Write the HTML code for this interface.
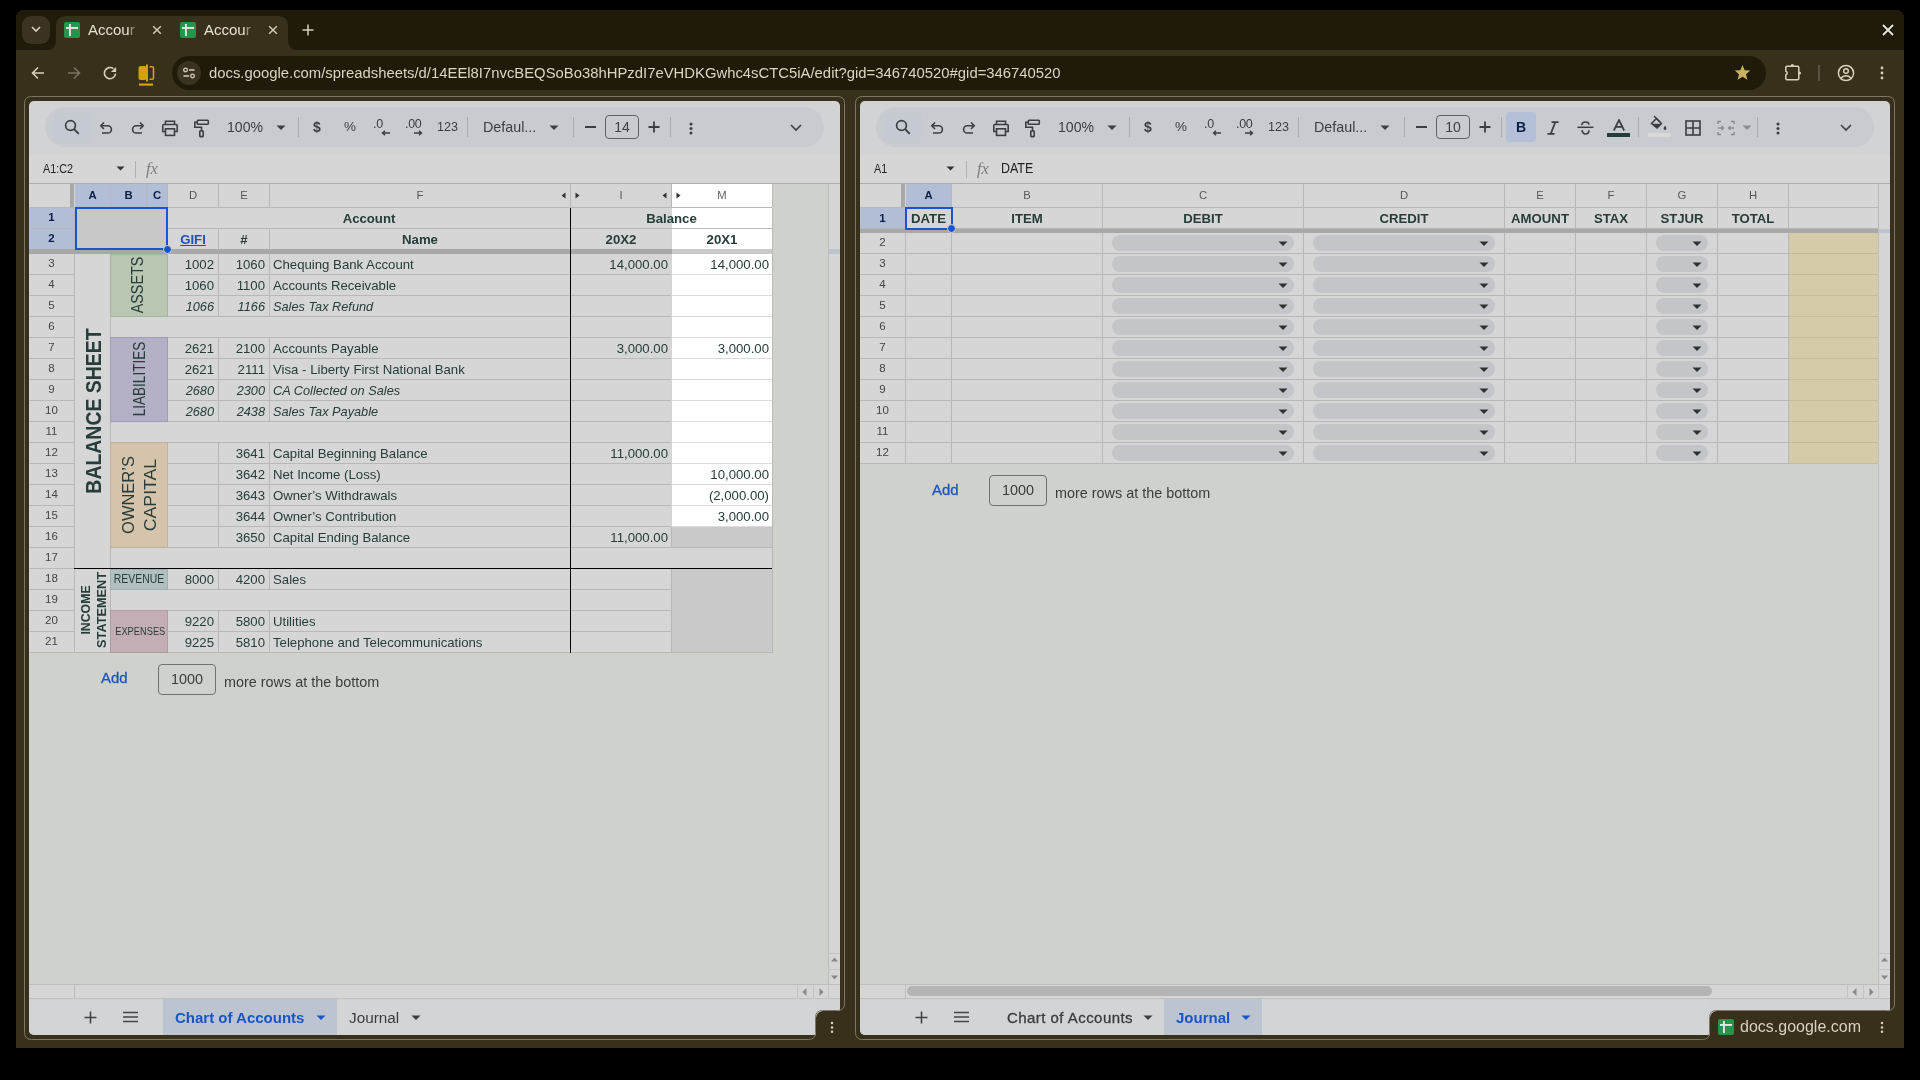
<!DOCTYPE html><html><head><meta charset="utf-8"><style>html,body{margin:0;padding:0;width:1920px;height:1080px;overflow:hidden;background:#000;font-family:"Liberation Sans",sans-serif;}div,svg{position:absolute;box-sizing:content-box;}</style></head><body><div style="left:0;top:0;width:1920px;height:1080px;overflow:hidden;will-change:transform;"><div style="left:16px;top:10px;width:1888px;height:1038px;background:#37301a;border-radius:8px 8px 0 0;"></div>
<div style="left:16px;top:10px;width:1888px;height:40px;background:#1f1a09;border-radius:8px 8px 0 0;"></div>
<div style="left:22px;top:16px;width:28px;height:28px;background:#3a3322;border-radius:9px;"></div>
<svg style="left:31px;top:26px;" width="10" height="7" viewBox="0 0 10 7"><path d="M1 1L5 5L9 1" fill="none" stroke="#d8d0b9" stroke-width="1.6"/></svg>
<svg style="left:46px;top:16px;" width="252" height="34" viewBox="0 0 252 34"><path d="M0 34 Q10 34 10 24 L10 10 Q10 0 20 0 L232 0 Q242 0 242 10 L242 24 Q242 34 252 34 Z" fill="#37301a"/></svg>
<svg style="left:64px;top:22px;" width="16" height="16" viewBox="0 0 16 16"><rect x="0" y="0" width="16" height="16" rx="2" fill="#28934a"/><rect x="2.00" y="4.96" width="12.00" height="1.92" fill="#e8e4ea"/><rect x="4.96" y="2.00" width="1.92" height="12.00" fill="#e8e4ea"/></svg>
<div style="left:88px;top:16px;height:28px;line-height:28px;white-space:nowrap;font-size:15px;color:#e8e2d0;">Accou<span style='opacity:.55'>r</span></div>
<svg style="left:152px;top:25px;" width="10" height="10" viewBox="0 0 10 10"><path d="M1.2 1.2L8.8 8.8M8.8 1.2L1.2 8.8" stroke="#d8d0b9" stroke-width="1.4"/></svg>
<svg style="left:180px;top:22px;" width="16" height="16" viewBox="0 0 16 16"><rect x="0" y="0" width="16" height="16" rx="2" fill="#28934a"/><rect x="2.00" y="4.96" width="12.00" height="1.92" fill="#e8e4ea"/><rect x="4.96" y="2.00" width="1.92" height="12.00" fill="#e8e4ea"/></svg>
<div style="left:204px;top:16px;height:28px;line-height:28px;white-space:nowrap;font-size:15px;color:#e8e2d0;">Accou<span style='opacity:.55'>r</span></div>
<svg style="left:268px;top:25px;" width="10" height="10" viewBox="0 0 10 10"><path d="M1.2 1.2L8.8 8.8M8.8 1.2L1.2 8.8" stroke="#d8d0b9" stroke-width="1.4"/></svg>
<svg style="left:302px;top:24px;" width="12" height="12" viewBox="0 0 12 12"><path d="M6 0.5V11.5M0.5 6H11.5" stroke="#d8d0b9" stroke-width="1.5"/></svg>
<svg style="left:1882px;top:24px;" width="12" height="12" viewBox="0 0 12 12"><path d="M1 1L11 11M11 1L1 11" stroke="#e6e6e6" stroke-width="1.8"/></svg>
<svg style="left:31px;top:66px;" width="14" height="14" viewBox="0 0 14 14"><path d="M13 7H2M7 1.5L1.5 7L7 12.5" fill="none" stroke="#d8d0b9" stroke-width="1.6"/></svg>
<svg style="left:67px;top:66px;" width="14" height="14" viewBox="0 0 14 14"><path d="M1 7H12M7 1.5L12.5 7L7 12.5" fill="none" stroke="#7a7160" stroke-width="1.6"/></svg>
<svg style="left:103px;top:66px;" width="14" height="14" viewBox="0 0 14 14"><path d="M12.6 7.6A5.6 5.6 0 1 1 10.4 2.6" fill="none" stroke="#d8d0b9" stroke-width="1.6"/><path d="M13.1 0.9V6.1H7.9Z" fill="#d8d0b9"/></svg>
<svg style="left:137px;top:64px;" width="18" height="23" viewBox="0 0 18 23"><rect x="1.5" y="2" width="8" height="14" rx="2" fill="#d4a20a"/><rect x="9" y="0.5" width="2" height="17" fill="#d4a20a"/><path d="M12.5 2.8H15.2A1.3 1.3 0 0 1 16.5 4.1V13.9A1.3 1.3 0 0 1 15.2 15.2H12.5" fill="none" stroke="#d4a20a" stroke-width="1.6"/><rect x="2" y="19.5" width="14" height="2.2" fill="#d4a20a"/></svg>
<div style="left:172px;top:56px;width:1594px;height:34px;background:#1f1a09;border-radius:17px;"></div>
<div style="left:177px;top:61px;width:24px;height:24px;background:#3a3322;border-radius:12px;"></div>
<svg style="left:181px;top:65px;" width="16" height="16" viewBox="0 0 16 16"><circle cx="4.5" cy="5" r="1.8" fill="none" stroke="#d8d0b9" stroke-width="1.3"/><path d="M8 5H13.5M2.5 11H8" stroke="#d8d0b9" stroke-width="1.3"/><circle cx="11.5" cy="11" r="1.8" fill="none" stroke="#d8d0b9" stroke-width="1.3"/></svg>
<div style="left:209px;top:56px;height:34px;line-height:34px;white-space:nowrap;font-size:14.85px;color:#dcd5c2;">docs.google.com/spreadsheets/d/14EEl8I7nvcBEQSoBo38hHPzdI7eVHDKGwhc4sCTC5iA/edit?gid=346740520#gid=346740520</div>
<svg style="left:1734px;top:64px;" width="17" height="17" viewBox="0 0 17 17"><path d="M8.5 1L10.7 6.2L16.3 6.6L12 10.2L13.4 15.7L8.5 12.7L3.6 15.7L5 10.2L0.7 6.6L6.3 6.2Z" fill="#c9b25a"/></svg>
<svg style="left:1784px;top:63px;" width="20" height="20" viewBox="0 0 20 20"><path d="M3 3.3H13.6A1.2 1.2 0 0 1 14.8 4.5V15.5A1.2 1.2 0 0 1 13.6 16.7H3A1.2 1.2 0 0 1 1.8 15.5V12A2 2 0 0 0 1.8 8.2V4.5A1.2 1.2 0 0 1 3 3.3Z" fill="none" stroke="#d8d0b9" stroke-width="1.5"/><circle cx="8.3" cy="2.6" r="1.5" fill="#d8d0b9"/><circle cx="15.5" cy="10.1" r="1.5" fill="#d8d0b9"/></svg>
<div style="left:1818px;top:65px;width:1.5px;height:16px;background:#5a5342;"></div>
<svg style="left:1837px;top:64px;" width="18" height="18" viewBox="0 0 18 18"><circle cx="9" cy="9" r="7.6" fill="none" stroke="#d8d0b9" stroke-width="1.5"/><circle cx="9" cy="7" r="2.3" fill="none" stroke="#d8d0b9" stroke-width="1.5"/><path d="M4 14Q9 9.5 14 14" fill="none" stroke="#d8d0b9" stroke-width="1.5"/></svg>
<svg style="left:1879px;top:65px;" width="6" height="16" viewBox="0 0 6 16"><circle cx="3" cy="3" r="1.4" fill="#d8d0b9"/><circle cx="3" cy="8" r="1.4" fill="#d8d0b9"/><circle cx="3" cy="13" r="1.4" fill="#d8d0b9"/></svg>
<div style="left:29px;top:101px;width:811px;height:934px;background:#d2d3d5;border-radius:5px 5px 4px 5px;"></div>
<div style="left:29px;top:1000px;width:786px;height:35px;background:#d3d4d6;border-radius:0 0 4px 5px;"></div>
<div style="left:45px;top:107px;width:779px;height:40px;background:#c8cbd0;border-radius:20px;"></div>
<div style="left:54px;top:113px;width:36px;height:28px;background:#c5c9d1;"></div>
<svg style="left:62.5px;top:118px;" width="18" height="18" viewBox="0 0 18 18"><circle cx="7.5" cy="7.5" r="4.9" fill="none" stroke="#3b3e42" stroke-width="1.7"/><path d="M11 11L15.8 15.8" stroke="#3b3e42" stroke-width="1.8"/></svg>
<svg style="left:98px;top:121px;" width="16" height="16" viewBox="0 0 16 16"><path d="M6 1.5L2.8 4.8L6 8" fill="none" stroke="#3b3e42" stroke-width="1.6"/><path d="M3 4.8H9.8A3.6 3.6 0 0 1 9.8 12H4" fill="none" stroke="#3b3e42" stroke-width="1.6"/></svg>
<svg style="left:130px;top:121px;" width="16" height="16" viewBox="0 0 16 16"><path d="M10 1.5L13.2 4.8L10 8" fill="none" stroke="#3b3e42" stroke-width="1.6"/><path d="M13 4.8H6.2A3.6 3.6 0 0 0 6.2 12H12" fill="none" stroke="#3b3e42" stroke-width="1.6"/></svg>
<svg style="left:161px;top:120px;" width="18" height="17" viewBox="0 0 18 17"><path d="M4.5 4.5V1.2H13.5V4.5" fill="none" stroke="#3b3e42" stroke-width="1.6"/><path d="M4 11.5H1.8V5.5A1 1 0 0 1 2.8 4.5H15.2A1 1 0 0 1 16.2 5.5V11.5H14" fill="none" stroke="#3b3e42" stroke-width="1.6"/><rect x="4.5" y="8.8" width="9" height="6.6" fill="none" stroke="#3b3e42" stroke-width="1.6"/></svg>
<svg style="left:193px;top:119px;" width="17" height="19" viewBox="0 0 17 19"><rect x="4.3" y="1.3" width="11" height="4" rx="0.8" fill="none" stroke="#3b3e42" stroke-width="1.6"/><path d="M4.3 3.3H1.8V8.3H8.5V12" fill="none" stroke="#3b3e42" stroke-width="1.6"/><rect x="6.8" y="12" width="3.4" height="5.6" rx="0.6" fill="none" stroke="#3b3e42" stroke-width="1.6"/></svg>
<div style="left:227px;top:117px;height:20px;line-height:20px;white-space:nowrap;font-size:14.1px;color:#3b3e42;">100%</div>
<svg style="left:276px;top:125px;" width="10" height="6" viewBox="0 0 10 6"><path d="M0.5 0.5H9.5L5 5Z" fill="#3b3e42"/></svg>
<div style="left:298px;top:117px;width:1px;height:20px;background:#a9abaf;"></div>
<div style="left:313px;top:117px;height:20px;line-height:20px;white-space:nowrap;font-size:14px;font-weight:bold;color:#3b3e42;">$</div>
<div style="left:344px;top:117px;height:20px;line-height:20px;white-space:nowrap;font-size:13.5px;color:#3b3e42;">%</div>
<div style="left:373px;top:114px;height:20px;line-height:20px;white-space:nowrap;font-size:12.5px;color:#3b3e42;letter-spacing:-0.3px;">.0</div>
<svg style="left:381px;top:130px;" width="10" height="6" viewBox="0 0 10 6"><path d="M9 3H2M4 0.8L1.5 3L4 5.2" fill="none" stroke="#3b3e42" stroke-width="1.4"/></svg>
<div style="left:405px;top:114px;height:20px;line-height:20px;white-space:nowrap;font-size:12.5px;color:#3b3e42;letter-spacing:-0.3px;">.00</div>
<svg style="left:413px;top:130px;" width="10" height="6" viewBox="0 0 10 6"><path d="M1 3H8M6 0.8L8.5 3L6 5.2" fill="none" stroke="#3b3e42" stroke-width="1.4"/></svg>
<div style="left:437px;top:117px;height:20px;line-height:20px;white-space:nowrap;font-size:12.6px;color:#3b3e42;">123</div>
<div style="left:467px;top:117px;width:1px;height:20px;background:#a9abaf;"></div>
<div style="left:483px;top:117px;height:20px;line-height:20px;white-space:nowrap;font-size:14.3px;color:#3b3e42;">Defaul...</div>
<svg style="left:549px;top:125px;" width="10" height="6" viewBox="0 0 10 6"><path d="M0.5 0.5H9.5L5 5Z" fill="#3b3e42"/></svg>
<div style="left:573px;top:117px;width:1px;height:20px;background:#a9abaf;"></div>
<div style="left:585px;top:126px;width:11px;height:1.8px;background:#3b3e42;"></div>
<div style="left:605px;top:115px;width:32px;height:22px;border:1.2px solid #5f6368;border-radius:4px;text-align:center;line-height:22px;font-size:14px;color:#3b3e42;">14</div>
<svg style="left:648px;top:121px;" width="12" height="12" viewBox="0 0 12 12"><path d="M6 0.5V11.5M0.5 6H11.5" stroke="#3b3e42" stroke-width="1.8"/></svg>
<div style="left:670px;top:117px;width:1px;height:20px;background:#a9abaf;"></div>
<div style="left:29px;top:155px;width:811px;height:28px;background:#d6d6d6;"></div>
<div style="left:29px;top:183px;width:811px;height:802px;background:#cfd1cd;"></div>
<div style="left:828px;top:183px;width:12px;height:802px;background:#d6d6d6;border-left:1px solid #bdbdbd;box-sizing:border-box;"></div>
<div style="left:29px;top:984px;width:811px;height:1px;background:#bdbdbd;"></div>
<div style="left:29px;top:985px;width:811px;height:13px;background:#d6d6d6;"></div>
<div style="left:29px;top:998px;width:811px;height:1px;background:#c0c0c0;"></div>
<div style="left:74px;top:985px;width:1px;height:13px;background:#bdbdbd;"></div>
<svg style="left:831px;top:957px;" width="7" height="5" viewBox="0 0 7 5"><path d="M0 4.5H7L3.5 0.5Z" fill="#888"/></svg>
<svg style="left:831px;top:975px;" width="7" height="5" viewBox="0 0 7 5"><path d="M0 0.5H7L3.5 4.5Z" fill="#888"/></svg>
<div style="left:828px;top:953px;width:12px;height:1px;background:#c4c4c4;"></div>
<div style="left:828px;top:969px;width:12px;height:1px;background:#c4c4c4;"></div>
<div style="left:797px;top:985px;width:1px;height:13px;background:#c4c4c4;"></div>
<div style="left:813px;top:985px;width:1px;height:13px;background:#c4c4c4;"></div>
<div style="left:828px;top:985px;width:1px;height:13px;background:#c4c4c4;"></div>
<svg style="left:802px;top:988px;" width="5" height="8" viewBox="0 0 5 8"><path d="M4.5 0L0.5 4L4.5 8Z" fill="#888"/></svg>
<svg style="left:819px;top:988px;" width="5" height="8" viewBox="0 0 5 8"><path d="M0.5 0L4.5 4L0.5 8Z" fill="#888"/></svg>
<svg style="left:84px;top:1011px;" width="13" height="13" viewBox="0 0 13 13"><path d="M6.5 0.5V12.5M0.5 6.5H12.5" stroke="#444" stroke-width="1.6"/></svg>
<svg style="left:123px;top:1011px;" width="15" height="12" viewBox="0 0 15 12"><path d="M0 1.5H15M0 6H15M0 10.5H15" stroke="#444" stroke-width="1.6"/></svg>
<div style="left:860px;top:101px;width:1030px;height:934px;background:#d2d3d5;border-radius:5px 5px 4px 5px;"></div>
<div style="left:860px;top:1000px;width:849px;height:35px;background:#d3d4d6;border-radius:0 0 4px 5px;"></div>
<div style="left:876px;top:107px;width:998px;height:40px;background:#c8cbd0;border-radius:20px;"></div>
<div style="left:885px;top:113px;width:36px;height:28px;background:#c5c9d1;"></div>
<svg style="left:893.5px;top:118px;" width="18" height="18" viewBox="0 0 18 18"><circle cx="7.5" cy="7.5" r="4.9" fill="none" stroke="#3b3e42" stroke-width="1.7"/><path d="M11 11L15.8 15.8" stroke="#3b3e42" stroke-width="1.8"/></svg>
<svg style="left:929px;top:121px;" width="16" height="16" viewBox="0 0 16 16"><path d="M6 1.5L2.8 4.8L6 8" fill="none" stroke="#3b3e42" stroke-width="1.6"/><path d="M3 4.8H9.8A3.6 3.6 0 0 1 9.8 12H4" fill="none" stroke="#3b3e42" stroke-width="1.6"/></svg>
<svg style="left:961px;top:121px;" width="16" height="16" viewBox="0 0 16 16"><path d="M10 1.5L13.2 4.8L10 8" fill="none" stroke="#3b3e42" stroke-width="1.6"/><path d="M13 4.8H6.2A3.6 3.6 0 0 0 6.2 12H12" fill="none" stroke="#3b3e42" stroke-width="1.6"/></svg>
<svg style="left:992px;top:120px;" width="18" height="17" viewBox="0 0 18 17"><path d="M4.5 4.5V1.2H13.5V4.5" fill="none" stroke="#3b3e42" stroke-width="1.6"/><path d="M4 11.5H1.8V5.5A1 1 0 0 1 2.8 4.5H15.2A1 1 0 0 1 16.2 5.5V11.5H14" fill="none" stroke="#3b3e42" stroke-width="1.6"/><rect x="4.5" y="8.8" width="9" height="6.6" fill="none" stroke="#3b3e42" stroke-width="1.6"/></svg>
<svg style="left:1024px;top:119px;" width="17" height="19" viewBox="0 0 17 19"><rect x="4.3" y="1.3" width="11" height="4" rx="0.8" fill="none" stroke="#3b3e42" stroke-width="1.6"/><path d="M4.3 3.3H1.8V8.3H8.5V12" fill="none" stroke="#3b3e42" stroke-width="1.6"/><rect x="6.8" y="12" width="3.4" height="5.6" rx="0.6" fill="none" stroke="#3b3e42" stroke-width="1.6"/></svg>
<div style="left:1058px;top:117px;height:20px;line-height:20px;white-space:nowrap;font-size:14.1px;color:#3b3e42;">100%</div>
<svg style="left:1107px;top:125px;" width="10" height="6" viewBox="0 0 10 6"><path d="M0.5 0.5H9.5L5 5Z" fill="#3b3e42"/></svg>
<div style="left:1129px;top:117px;width:1px;height:20px;background:#a9abaf;"></div>
<div style="left:1144px;top:117px;height:20px;line-height:20px;white-space:nowrap;font-size:14px;font-weight:bold;color:#3b3e42;">$</div>
<div style="left:1175px;top:117px;height:20px;line-height:20px;white-space:nowrap;font-size:13.5px;color:#3b3e42;">%</div>
<div style="left:1204px;top:114px;height:20px;line-height:20px;white-space:nowrap;font-size:12.5px;color:#3b3e42;letter-spacing:-0.3px;">.0</div>
<svg style="left:1212px;top:130px;" width="10" height="6" viewBox="0 0 10 6"><path d="M9 3H2M4 0.8L1.5 3L4 5.2" fill="none" stroke="#3b3e42" stroke-width="1.4"/></svg>
<div style="left:1236px;top:114px;height:20px;line-height:20px;white-space:nowrap;font-size:12.5px;color:#3b3e42;letter-spacing:-0.3px;">.00</div>
<svg style="left:1244px;top:130px;" width="10" height="6" viewBox="0 0 10 6"><path d="M1 3H8M6 0.8L8.5 3L6 5.2" fill="none" stroke="#3b3e42" stroke-width="1.4"/></svg>
<div style="left:1268px;top:117px;height:20px;line-height:20px;white-space:nowrap;font-size:12.6px;color:#3b3e42;">123</div>
<div style="left:1298px;top:117px;width:1px;height:20px;background:#a9abaf;"></div>
<div style="left:1314px;top:117px;height:20px;line-height:20px;white-space:nowrap;font-size:14.3px;color:#3b3e42;">Defaul...</div>
<svg style="left:1380px;top:125px;" width="10" height="6" viewBox="0 0 10 6"><path d="M0.5 0.5H9.5L5 5Z" fill="#3b3e42"/></svg>
<div style="left:1404px;top:117px;width:1px;height:20px;background:#a9abaf;"></div>
<div style="left:1416px;top:126px;width:11px;height:1.8px;background:#3b3e42;"></div>
<div style="left:1436px;top:115px;width:32px;height:22px;border:1.2px solid #5f6368;border-radius:4px;text-align:center;line-height:22px;font-size:14px;color:#3b3e42;">10</div>
<svg style="left:1479px;top:121px;" width="12" height="12" viewBox="0 0 12 12"><path d="M6 0.5V11.5M0.5 6H11.5" stroke="#3b3e42" stroke-width="1.8"/></svg>
<div style="left:1501px;top:117px;width:1px;height:20px;background:#a9abaf;"></div>
<div style="left:860px;top:155px;width:1030px;height:28px;background:#d6d6d6;"></div>
<div style="left:860px;top:183px;width:1030px;height:802px;background:#cfd1cd;"></div>
<div style="left:1878px;top:183px;width:12px;height:802px;background:#d6d6d6;border-left:1px solid #bdbdbd;box-sizing:border-box;"></div>
<div style="left:860px;top:984px;width:1030px;height:1px;background:#bdbdbd;"></div>
<div style="left:860px;top:985px;width:1030px;height:13px;background:#d6d6d6;"></div>
<div style="left:860px;top:998px;width:1030px;height:1px;background:#c0c0c0;"></div>
<div style="left:905px;top:985px;width:1px;height:13px;background:#bdbdbd;"></div>
<svg style="left:1881px;top:957px;" width="7" height="5" viewBox="0 0 7 5"><path d="M0 4.5H7L3.5 0.5Z" fill="#888"/></svg>
<svg style="left:1881px;top:975px;" width="7" height="5" viewBox="0 0 7 5"><path d="M0 0.5H7L3.5 4.5Z" fill="#888"/></svg>
<div style="left:1878px;top:953px;width:12px;height:1px;background:#c4c4c4;"></div>
<div style="left:1878px;top:969px;width:12px;height:1px;background:#c4c4c4;"></div>
<div style="left:1847px;top:985px;width:1px;height:13px;background:#c4c4c4;"></div>
<div style="left:1863px;top:985px;width:1px;height:13px;background:#c4c4c4;"></div>
<div style="left:1878px;top:985px;width:1px;height:13px;background:#c4c4c4;"></div>
<svg style="left:1852px;top:988px;" width="5" height="8" viewBox="0 0 5 8"><path d="M4.5 0L0.5 4L4.5 8Z" fill="#888"/></svg>
<svg style="left:1869px;top:988px;" width="5" height="8" viewBox="0 0 5 8"><path d="M0.5 0L4.5 4L0.5 8Z" fill="#888"/></svg>
<svg style="left:915px;top:1011px;" width="13" height="13" viewBox="0 0 13 13"><path d="M6.5 0.5V12.5M0.5 6.5H12.5" stroke="#444" stroke-width="1.6"/></svg>
<svg style="left:954px;top:1011px;" width="15" height="12" viewBox="0 0 15 12"><path d="M0 1.5H15M0 6H15M0 10.5H15" stroke="#444" stroke-width="1.6"/></svg>
<svg style="left:688px;top:120.5px;" width="6" height="16" viewBox="0 0 6 16"><circle cx="3" cy="3" r="1.5" fill="#3b3e42"/><circle cx="3" cy="7.5" r="1.5" fill="#3b3e42"/><circle cx="3" cy="12.0" r="1.5" fill="#3b3e42"/></svg>
<svg style="left:790px;top:124px;" width="12" height="8" viewBox="0 0 12 8"><path d="M1 1L6 6L11 1" fill="none" stroke="#3b3e42" stroke-width="1.6"/></svg>
<div style="left:1506px;top:112px;width:30px;height:30px;background:#b3c0d8;border-radius:4px;"></div>
<div style="left:1516px;top:117px;height:20px;line-height:20px;white-space:nowrap;font-size:14px;font-weight:bold;color:#0b1f48;">B</div>
<svg style="left:1546px;top:121px;" width="14" height="14" viewBox="0 0 14 14"><path d="M5.5 1.2H12.5M1.5 12.8H8.5M9.2 1.2L4.8 12.8" fill="none" stroke="#3b3e42" stroke-width="1.8"/></svg>
<svg style="left:1577px;top:121px;" width="17" height="14" viewBox="0 0 17 14"><path d="M0.5 6.3H16.5" stroke="#3b3e42" stroke-width="1.5"/><path d="M4.8 4.2Q5 1 8.5 1Q11.8 1 12 3.6" fill="none" stroke="#3b3e42" stroke-width="1.6"/><path d="M5 9.2Q5.5 13 8.5 13Q11.8 13 12 9.2" fill="none" stroke="#3b3e42" stroke-width="1.6"/></svg>
<svg style="left:1612px;top:119px;" width="14" height="13" viewBox="0 0 14 13"><path d="M1.8 11.5L7 1L12.2 11.5M3.8 7.8H10.2" fill="none" stroke="#3b3e42" stroke-width="1.7"/></svg>
<div style="left:1607px;top:133px;width:23px;height:4px;background:#233d39;"></div>
<div style="left:1638px;top:117px;width:1px;height:20px;background:#a9abaf;"></div>
<svg style="left:1650px;top:115px;" width="18" height="17" viewBox="0 0 18 17"><path d="M4 1L10 7" stroke="#3b3e42" stroke-width="1.5"/><path d="M1.5 8.5L6.5 3.5L11.5 8.5L7 13L1.5 8.5Z" fill="none" stroke="#3b3e42" stroke-width="1.5"/><path d="M2 8.8H11.2L7 13Z" fill="#3b3e42"/><path d="M15 10.5Q13.5 12.8 13.6 13.6A1.4 1.4 0 0 0 16.4 13.6Q16.5 12.8 15 10.5Z" fill="#3b3e42"/></svg>
<div style="left:1648px;top:133px;width:23px;height:4px;background:#d9d9d7;"></div>
<svg style="left:1685px;top:120px;" width="16" height="16" viewBox="0 0 16 16"><rect x="1" y="1" width="14" height="14" fill="none" stroke="#3b3e42" stroke-width="1.6"/><path d="M8 1V15M1 8H15" stroke="#3b3e42" stroke-width="1.6"/></svg>
<svg style="left:1717px;top:120px;" width="18" height="16" viewBox="0 0 18 16"><path d="M1 4V1.5H4M1 12V14.5H4M17 4V1.5H14M17 12V14.5H14" fill="none" stroke="#8c8d90" stroke-width="1.5"/><path d="M1 8H6M4.5 6L6.5 8L4.5 10M17 8H12M13.5 6L11.5 8L13.5 10" fill="none" stroke="#8c8d90" stroke-width="1.4"/></svg>
<svg style="left:1742px;top:125px;" width="10" height="6" viewBox="0 0 10 6"><path d="M0.5 0.5H9.5L5 5Z" fill="#8c8d90"/></svg>
<div style="left:1757px;top:117px;width:1px;height:20px;background:#a9abaf;"></div>
<svg style="left:1775px;top:120.5px;" width="6" height="16" viewBox="0 0 6 16"><circle cx="3" cy="3" r="1.5" fill="#3b3e42"/><circle cx="3" cy="7.5" r="1.5" fill="#3b3e42"/><circle cx="3" cy="12.0" r="1.5" fill="#3b3e42"/></svg>
<svg style="left:1840px;top:124px;" width="12" height="8" viewBox="0 0 12 8"><path d="M1 1L6 6L11 1" fill="none" stroke="#3b3e42" stroke-width="1.6"/></svg>
<div style="left:43px;top:158px;height:22px;line-height:22px;white-space:nowrap;font-size:12.6px;color:#202124;transform:scaleX(0.86);transform-origin:0 0;">A1:C2</div>
<svg style="left:116px;top:166px;" width="9" height="5" viewBox="0 0 9 5"><path d="M0.5 0.5H8.5L4.5 4.5Z" fill="#333"/></svg>
<div style="left:135px;top:161px;width:1px;height:17px;background:#b0b0b0;"></div>
<div style="left:146px;top:158px;height:22px;line-height:22px;white-space:nowrap;font-family:'Liberation Serif',serif;font-size:16.5px;color:#7d7d7d;"><i>fx</i></div>
<div style="left:874px;top:158px;height:22px;line-height:22px;white-space:nowrap;font-size:12.6px;color:#202124;transform:scaleX(0.85);transform-origin:0 0;">A1</div>
<svg style="left:946px;top:166px;" width="9" height="5" viewBox="0 0 9 5"><path d="M0.5 0.5H8.5L4.5 4.5Z" fill="#333"/></svg>
<div style="left:966px;top:161px;width:1px;height:17px;background:#b0b0b0;"></div>
<div style="left:977px;top:158px;height:22px;line-height:22px;white-space:nowrap;font-family:'Liberation Serif',serif;font-size:16.5px;color:#7d7d7d;"><i>fx</i></div>
<div style="left:1001px;top:156.5px;height:22px;line-height:22px;white-space:nowrap;font-size:15px;color:#202124;transform:scaleX(0.83);transform-origin:0 0;">DATE</div>
<div style="left:29px;top:183px;width:743px;height:24px;background:#d6d6d6;"></div>
<div style="left:672px;top:183px;width:100px;height:24px;background:#ffffff;"></div>
<div style="left:75px;top:184px;width:92px;height:23px;background:#b1bed6;"></div>
<div style="left:29px;top:183px;width:811px;height:1px;background:#acacac;"></div>
<div style="left:29px;top:207px;width:743px;height:1px;background:#b8b8b8;"></div>
<div style="left:70px;top:184px;width:4px;height:23px;background:#a8a8a8;"></div>
<div style="left:110px;top:184px;width:1px;height:23px;background:#b8b8b8;"></div>
<div style="left:146px;top:184px;width:1px;height:23px;background:#b8b8b8;"></div>
<div style="left:167px;top:184px;width:1px;height:23px;background:#b8b8b8;"></div>
<div style="left:218px;top:184px;width:1px;height:23px;background:#b8b8b8;"></div>
<div style="left:269px;top:184px;width:1px;height:23px;background:#b8b8b8;"></div>
<div style="left:570px;top:184px;width:1px;height:23px;background:#b8b8b8;"></div>
<div style="left:671px;top:184px;width:1px;height:23px;background:#b8b8b8;"></div>
<div style="left:772px;top:184px;width:1px;height:23px;background:#b8b8b8;"></div>
<div style="left:75px;top:184px;width:35px;height:23px;line-height:23px;text-align:center;font-size:11.3px;font-weight:bold;color:#0b1f48;">A</div>
<div style="left:111px;top:184px;width:35px;height:23px;line-height:23px;text-align:center;font-size:11.3px;font-weight:bold;color:#0b1f48;">B</div>
<div style="left:147px;top:184px;width:20px;height:23px;line-height:23px;text-align:center;font-size:11.3px;font-weight:bold;color:#0b1f48;">C</div>
<div style="left:168px;top:184px;width:50px;height:23px;line-height:23px;text-align:center;font-size:11.3px;color:#575757;">D</div>
<div style="left:219px;top:184px;width:50px;height:23px;line-height:23px;text-align:center;font-size:11.3px;color:#575757;">E</div>
<div style="left:270px;top:184px;width:300px;height:23px;line-height:23px;text-align:center;font-size:11.3px;color:#575757;">F</div>
<div style="left:571px;top:184px;width:100px;height:23px;line-height:23px;text-align:center;font-size:11.3px;color:#575757;">I</div>
<div style="left:672px;top:184px;width:100px;height:23px;line-height:23px;text-align:center;font-size:11.3px;color:#5f5f5f;">M</div>
<svg style="left:561px;top:192px;" width="5" height="7" viewBox="0 0 5 7"><path d="M4.5 0.5V6.5L0.5 3.5Z" fill="#333"/></svg>
<svg style="left:575px;top:192px;" width="5" height="7" viewBox="0 0 5 7"><path d="M0.5 0.5V6.5L4.5 3.5Z" fill="#333"/></svg>
<svg style="left:662px;top:192px;" width="5" height="7" viewBox="0 0 5 7"><path d="M4.5 0.5V6.5L0.5 3.5Z" fill="#333"/></svg>
<svg style="left:676px;top:192px;" width="5" height="7" viewBox="0 0 5 7"><path d="M0.5 0.5V6.5L4.5 3.5Z" fill="#333"/></svg>
<div style="left:29px;top:208px;width:743px;height:445px;background:#d6d6d6;"></div>
<div style="left:672px;top:208px;width:100px;height:339px;background:#ffffff;"></div>
<div style="left:672px;top:527px;width:100px;height:21px;background:#c9c9c9;"></div>
<div style="left:672px;top:569px;width:100px;height:84px;background:#c9c9c9;"></div>
<div style="left:75px;top:208px;width:92px;height:41px;background:#c8c8c8;"></div>
<div style="left:29px;top:208px;width:45px;height:41px;background:#b1bed6;"></div>
<div style="left:74px;top:208px;width:1px;height:445px;background:#b8b8b8;"></div>
<div style="left:29px;top:228px;width:45px;height:1px;background:#b8b8b8;"></div>
<div style="left:29px;top:249px;width:743px;height:1px;background:#b8b8b8;"></div>
<div style="left:29px;top:249px;width:743px;height:5px;background:#a8a8a8;"></div>
<div style="left:672px;top:249px;width:100px;height:5px;background:#c9c9c9;"></div>
<div style="left:829px;top:249px;width:11px;height:5px;background:#bcc4d0;"></div>
<div style="left:29px;top:208px;width:45px;height:20px;line-height:19.5px;text-align:center;font-size:11.5px;font-weight:bold;color:#0b1f48;">1</div>
<div style="left:29px;top:229px;width:45px;height:20px;line-height:19.5px;text-align:center;font-size:11.5px;font-weight:bold;color:#0b1f48;">2</div>
<div style="left:29px;top:274px;width:45px;height:1px;background:#b8b8b8;"></div>
<div style="left:29px;top:254px;width:45px;height:20px;line-height:19px;text-align:center;font-size:11.5px;color:#444;">3</div>
<div style="left:29px;top:295px;width:45px;height:1px;background:#b8b8b8;"></div>
<div style="left:29px;top:275px;width:45px;height:20px;line-height:19px;text-align:center;font-size:11.5px;color:#444;">4</div>
<div style="left:29px;top:316px;width:45px;height:1px;background:#b8b8b8;"></div>
<div style="left:29px;top:296px;width:45px;height:20px;line-height:19px;text-align:center;font-size:11.5px;color:#444;">5</div>
<div style="left:29px;top:337px;width:45px;height:1px;background:#b8b8b8;"></div>
<div style="left:29px;top:317px;width:45px;height:20px;line-height:19px;text-align:center;font-size:11.5px;color:#444;">6</div>
<div style="left:29px;top:358px;width:45px;height:1px;background:#b8b8b8;"></div>
<div style="left:29px;top:338px;width:45px;height:20px;line-height:19px;text-align:center;font-size:11.5px;color:#444;">7</div>
<div style="left:29px;top:379px;width:45px;height:1px;background:#b8b8b8;"></div>
<div style="left:29px;top:359px;width:45px;height:20px;line-height:19px;text-align:center;font-size:11.5px;color:#444;">8</div>
<div style="left:29px;top:400px;width:45px;height:1px;background:#b8b8b8;"></div>
<div style="left:29px;top:380px;width:45px;height:20px;line-height:19px;text-align:center;font-size:11.5px;color:#444;">9</div>
<div style="left:29px;top:421px;width:45px;height:1px;background:#b8b8b8;"></div>
<div style="left:29px;top:401px;width:45px;height:20px;line-height:19px;text-align:center;font-size:11.5px;color:#444;">10</div>
<div style="left:29px;top:442px;width:45px;height:1px;background:#b8b8b8;"></div>
<div style="left:29px;top:422px;width:45px;height:20px;line-height:19px;text-align:center;font-size:11.5px;color:#444;">11</div>
<div style="left:29px;top:463px;width:45px;height:1px;background:#b8b8b8;"></div>
<div style="left:29px;top:443px;width:45px;height:20px;line-height:19px;text-align:center;font-size:11.5px;color:#444;">12</div>
<div style="left:29px;top:484px;width:45px;height:1px;background:#b8b8b8;"></div>
<div style="left:29px;top:464px;width:45px;height:20px;line-height:19px;text-align:center;font-size:11.5px;color:#444;">13</div>
<div style="left:29px;top:505px;width:45px;height:1px;background:#b8b8b8;"></div>
<div style="left:29px;top:485px;width:45px;height:20px;line-height:19px;text-align:center;font-size:11.5px;color:#444;">14</div>
<div style="left:29px;top:526px;width:45px;height:1px;background:#b8b8b8;"></div>
<div style="left:29px;top:506px;width:45px;height:20px;line-height:19px;text-align:center;font-size:11.5px;color:#444;">15</div>
<div style="left:29px;top:547px;width:45px;height:1px;background:#b8b8b8;"></div>
<div style="left:29px;top:527px;width:45px;height:20px;line-height:19px;text-align:center;font-size:11.5px;color:#444;">16</div>
<div style="left:29px;top:568px;width:45px;height:1px;background:#b8b8b8;"></div>
<div style="left:29px;top:548px;width:45px;height:20px;line-height:19px;text-align:center;font-size:11.5px;color:#444;">17</div>
<div style="left:29px;top:589px;width:45px;height:1px;background:#b8b8b8;"></div>
<div style="left:29px;top:569px;width:45px;height:20px;line-height:19px;text-align:center;font-size:11.5px;color:#444;">18</div>
<div style="left:29px;top:610px;width:45px;height:1px;background:#b8b8b8;"></div>
<div style="left:29px;top:590px;width:45px;height:20px;line-height:19px;text-align:center;font-size:11.5px;color:#444;">19</div>
<div style="left:29px;top:631px;width:45px;height:1px;background:#b8b8b8;"></div>
<div style="left:29px;top:611px;width:45px;height:20px;line-height:19px;text-align:center;font-size:11.5px;color:#444;">20</div>
<div style="left:29px;top:652px;width:45px;height:1px;background:#b8b8b8;"></div>
<div style="left:29px;top:632px;width:45px;height:20px;line-height:19px;text-align:center;font-size:11.5px;color:#444;">21</div>
<div style="left:168px;top:228px;width:604px;height:1px;background:#b8b8b8;"></div>
<div style="left:218px;top:229px;width:1px;height:20px;background:#b8b8b8;"></div>
<div style="left:269px;top:229px;width:1px;height:20px;background:#b8b8b8;"></div>
<div style="left:671px;top:229px;width:1px;height:20px;background:#d4d4d4;"></div>
<div style="left:772px;top:208px;width:1px;height:445px;background:#b8b8b8;"></div>
<div style="left:168px;top:208px;width:402px;height:21px;line-height:21px;text-align:center;white-space:nowrap;font-size:13.2px;color:#263d39;font-weight:bold;">Account</div>
<div style="left:571px;top:208px;width:201px;height:21px;line-height:21px;text-align:center;white-space:nowrap;font-size:13.2px;color:#263d39;font-weight:bold;">Balance</div>
<div style="left:168px;top:229px;width:50px;height:21px;line-height:21px;text-align:center;white-space:nowrap;font-size:13.2px;color:#263d39;font-weight:bold;color:#1f4fb8;"><u>GIFI</u></div>
<div style="left:219px;top:229px;width:50px;height:21px;line-height:21px;text-align:center;white-space:nowrap;font-size:13.2px;color:#263d39;font-weight:bold;">#</div>
<div style="left:270px;top:229px;width:300px;height:21px;line-height:21px;text-align:center;white-space:nowrap;font-size:13.2px;color:#263d39;font-weight:bold;">Name</div>
<div style="left:571px;top:229px;width:100px;height:21px;line-height:21px;text-align:center;white-space:nowrap;font-size:13.2px;color:#263d39;font-weight:bold;">20X2</div>
<div style="left:672px;top:229px;width:100px;height:21px;line-height:21px;text-align:center;white-space:nowrap;font-size:13.2px;color:#263d39;font-weight:bold;">20X1</div>
<div style="left:167px;top:254px;width:1px;height:21px;background:#b8b8b8;"></div>
<div style="left:218px;top:254px;width:1px;height:21px;background:#b8b8b8;"></div>
<div style="left:269px;top:254px;width:1px;height:21px;background:#b8b8b8;"></div>
<div style="left:167px;top:275px;width:1px;height:21px;background:#b8b8b8;"></div>
<div style="left:218px;top:275px;width:1px;height:21px;background:#b8b8b8;"></div>
<div style="left:269px;top:275px;width:1px;height:21px;background:#b8b8b8;"></div>
<div style="left:167px;top:296px;width:1px;height:21px;background:#b8b8b8;"></div>
<div style="left:218px;top:296px;width:1px;height:21px;background:#b8b8b8;"></div>
<div style="left:269px;top:296px;width:1px;height:21px;background:#b8b8b8;"></div>
<div style="left:167px;top:338px;width:1px;height:21px;background:#b8b8b8;"></div>
<div style="left:218px;top:338px;width:1px;height:21px;background:#b8b8b8;"></div>
<div style="left:269px;top:338px;width:1px;height:21px;background:#b8b8b8;"></div>
<div style="left:167px;top:359px;width:1px;height:21px;background:#b8b8b8;"></div>
<div style="left:218px;top:359px;width:1px;height:21px;background:#b8b8b8;"></div>
<div style="left:269px;top:359px;width:1px;height:21px;background:#b8b8b8;"></div>
<div style="left:167px;top:380px;width:1px;height:21px;background:#b8b8b8;"></div>
<div style="left:218px;top:380px;width:1px;height:21px;background:#b8b8b8;"></div>
<div style="left:269px;top:380px;width:1px;height:21px;background:#b8b8b8;"></div>
<div style="left:167px;top:401px;width:1px;height:21px;background:#b8b8b8;"></div>
<div style="left:218px;top:401px;width:1px;height:21px;background:#b8b8b8;"></div>
<div style="left:269px;top:401px;width:1px;height:21px;background:#b8b8b8;"></div>
<div style="left:167px;top:443px;width:1px;height:21px;background:#b8b8b8;"></div>
<div style="left:218px;top:443px;width:1px;height:21px;background:#b8b8b8;"></div>
<div style="left:269px;top:443px;width:1px;height:21px;background:#b8b8b8;"></div>
<div style="left:167px;top:464px;width:1px;height:21px;background:#b8b8b8;"></div>
<div style="left:218px;top:464px;width:1px;height:21px;background:#b8b8b8;"></div>
<div style="left:269px;top:464px;width:1px;height:21px;background:#b8b8b8;"></div>
<div style="left:167px;top:485px;width:1px;height:21px;background:#b8b8b8;"></div>
<div style="left:218px;top:485px;width:1px;height:21px;background:#b8b8b8;"></div>
<div style="left:269px;top:485px;width:1px;height:21px;background:#b8b8b8;"></div>
<div style="left:167px;top:506px;width:1px;height:21px;background:#b8b8b8;"></div>
<div style="left:218px;top:506px;width:1px;height:21px;background:#b8b8b8;"></div>
<div style="left:269px;top:506px;width:1px;height:21px;background:#b8b8b8;"></div>
<div style="left:167px;top:527px;width:1px;height:21px;background:#b8b8b8;"></div>
<div style="left:218px;top:527px;width:1px;height:21px;background:#b8b8b8;"></div>
<div style="left:269px;top:527px;width:1px;height:21px;background:#b8b8b8;"></div>
<div style="left:167px;top:569px;width:1px;height:21px;background:#b8b8b8;"></div>
<div style="left:218px;top:569px;width:1px;height:21px;background:#b8b8b8;"></div>
<div style="left:269px;top:569px;width:1px;height:21px;background:#b8b8b8;"></div>
<div style="left:167px;top:611px;width:1px;height:21px;background:#b8b8b8;"></div>
<div style="left:218px;top:611px;width:1px;height:21px;background:#b8b8b8;"></div>
<div style="left:269px;top:611px;width:1px;height:21px;background:#b8b8b8;"></div>
<div style="left:167px;top:632px;width:1px;height:21px;background:#b8b8b8;"></div>
<div style="left:218px;top:632px;width:1px;height:21px;background:#b8b8b8;"></div>
<div style="left:269px;top:632px;width:1px;height:21px;background:#b8b8b8;"></div>
<div style="left:167px;top:274px;width:403px;height:1px;background:#b8b8b8;"></div>
<div style="left:571px;top:274px;width:100px;height:1px;background:#b8b8b8;"></div>
<div style="left:672px;top:274px;width:100px;height:1px;background:#dcdcdc;"></div>
<div style="left:671px;top:254px;width:1px;height:21px;background:#d4d4d4;"></div>
<div style="left:167px;top:295px;width:403px;height:1px;background:#b8b8b8;"></div>
<div style="left:571px;top:295px;width:100px;height:1px;background:#b8b8b8;"></div>
<div style="left:672px;top:295px;width:100px;height:1px;background:#dcdcdc;"></div>
<div style="left:671px;top:275px;width:1px;height:21px;background:#d4d4d4;"></div>
<div style="left:110px;top:316px;width:460px;height:1px;background:#b8b8b8;"></div>
<div style="left:571px;top:316px;width:100px;height:1px;background:#b8b8b8;"></div>
<div style="left:672px;top:316px;width:100px;height:1px;background:#dcdcdc;"></div>
<div style="left:671px;top:296px;width:1px;height:21px;background:#d4d4d4;"></div>
<div style="left:110px;top:337px;width:460px;height:1px;background:#b8b8b8;"></div>
<div style="left:571px;top:337px;width:100px;height:1px;background:#b8b8b8;"></div>
<div style="left:672px;top:337px;width:100px;height:1px;background:#dcdcdc;"></div>
<div style="left:671px;top:317px;width:1px;height:21px;background:#d4d4d4;"></div>
<div style="left:167px;top:358px;width:403px;height:1px;background:#b8b8b8;"></div>
<div style="left:571px;top:358px;width:100px;height:1px;background:#b8b8b8;"></div>
<div style="left:672px;top:358px;width:100px;height:1px;background:#dcdcdc;"></div>
<div style="left:671px;top:338px;width:1px;height:21px;background:#d4d4d4;"></div>
<div style="left:167px;top:379px;width:403px;height:1px;background:#b8b8b8;"></div>
<div style="left:571px;top:379px;width:100px;height:1px;background:#b8b8b8;"></div>
<div style="left:672px;top:379px;width:100px;height:1px;background:#dcdcdc;"></div>
<div style="left:671px;top:359px;width:1px;height:21px;background:#d4d4d4;"></div>
<div style="left:167px;top:400px;width:403px;height:1px;background:#b8b8b8;"></div>
<div style="left:571px;top:400px;width:100px;height:1px;background:#b8b8b8;"></div>
<div style="left:672px;top:400px;width:100px;height:1px;background:#dcdcdc;"></div>
<div style="left:671px;top:380px;width:1px;height:21px;background:#d4d4d4;"></div>
<div style="left:110px;top:421px;width:460px;height:1px;background:#b8b8b8;"></div>
<div style="left:571px;top:421px;width:100px;height:1px;background:#b8b8b8;"></div>
<div style="left:672px;top:421px;width:100px;height:1px;background:#dcdcdc;"></div>
<div style="left:671px;top:401px;width:1px;height:21px;background:#d4d4d4;"></div>
<div style="left:110px;top:442px;width:460px;height:1px;background:#b8b8b8;"></div>
<div style="left:571px;top:442px;width:100px;height:1px;background:#b8b8b8;"></div>
<div style="left:672px;top:442px;width:100px;height:1px;background:#dcdcdc;"></div>
<div style="left:671px;top:422px;width:1px;height:21px;background:#d4d4d4;"></div>
<div style="left:167px;top:463px;width:403px;height:1px;background:#b8b8b8;"></div>
<div style="left:571px;top:463px;width:100px;height:1px;background:#b8b8b8;"></div>
<div style="left:672px;top:463px;width:100px;height:1px;background:#dcdcdc;"></div>
<div style="left:671px;top:443px;width:1px;height:21px;background:#d4d4d4;"></div>
<div style="left:167px;top:484px;width:403px;height:1px;background:#b8b8b8;"></div>
<div style="left:571px;top:484px;width:100px;height:1px;background:#b8b8b8;"></div>
<div style="left:672px;top:484px;width:100px;height:1px;background:#dcdcdc;"></div>
<div style="left:671px;top:464px;width:1px;height:21px;background:#d4d4d4;"></div>
<div style="left:167px;top:505px;width:403px;height:1px;background:#b8b8b8;"></div>
<div style="left:571px;top:505px;width:100px;height:1px;background:#b8b8b8;"></div>
<div style="left:672px;top:505px;width:100px;height:1px;background:#dcdcdc;"></div>
<div style="left:671px;top:485px;width:1px;height:21px;background:#d4d4d4;"></div>
<div style="left:167px;top:526px;width:403px;height:1px;background:#b8b8b8;"></div>
<div style="left:571px;top:526px;width:100px;height:1px;background:#b8b8b8;"></div>
<div style="left:672px;top:526px;width:100px;height:1px;background:#dcdcdc;"></div>
<div style="left:671px;top:506px;width:1px;height:21px;background:#d4d4d4;"></div>
<div style="left:110px;top:547px;width:460px;height:1px;background:#b8b8b8;"></div>
<div style="left:571px;top:547px;width:100px;height:1px;background:#b8b8b8;"></div>
<div style="left:672px;top:547px;width:100px;height:1px;background:#b8b8b8;"></div>
<div style="left:671px;top:527px;width:1px;height:21px;background:#b8b8b8;"></div>
<div style="left:110px;top:589px;width:460px;height:1px;background:#b8b8b8;"></div>
<div style="left:571px;top:589px;width:100px;height:1px;background:#b8b8b8;"></div>
<div style="left:671px;top:569px;width:1px;height:21px;background:#b8b8b8;"></div>
<div style="left:110px;top:610px;width:460px;height:1px;background:#b8b8b8;"></div>
<div style="left:571px;top:610px;width:100px;height:1px;background:#b8b8b8;"></div>
<div style="left:671px;top:590px;width:1px;height:21px;background:#b8b8b8;"></div>
<div style="left:167px;top:631px;width:403px;height:1px;background:#b8b8b8;"></div>
<div style="left:571px;top:631px;width:100px;height:1px;background:#b8b8b8;"></div>
<div style="left:671px;top:611px;width:1px;height:21px;background:#b8b8b8;"></div>
<div style="left:110px;top:652px;width:460px;height:1px;background:#b8b8b8;"></div>
<div style="left:571px;top:652px;width:100px;height:1px;background:#b8b8b8;"></div>
<div style="left:672px;top:652px;width:100px;height:1px;background:#b8b8b8;"></div>
<div style="left:671px;top:632px;width:1px;height:21px;background:#b8b8b8;"></div>
<div style="left:110px;top:254px;width:1px;height:399px;background:#b8b8b8;"></div>
<div style="left:29px;top:652px;width:45px;height:1px;background:#b8b8b8;"></div>
<div style="left:75px;top:652px;width:697px;height:1px;background:#b8b8b8;"></div>
<div style="left:570px;top:208px;width:1px;height:445px;background:#000;"></div>
<div style="left:74px;top:568px;width:698px;height:1px;background:#000;"></div>
<div style="left:110px;top:254px;width:58px;height:63px;background:#b8c6b2;border:1px solid #a6b5a0;box-sizing:border-box;"></div>
<div style="left:110px;top:337px;width:58px;height:85px;background:#b4b0c6;border:1px solid #a09cb5;box-sizing:border-box;"></div>
<div style="left:110px;top:442px;width:58px;height:106px;background:#d5c3ac;border:1px solid #c3b098;box-sizing:border-box;"></div>
<div style="left:110px;top:569px;width:58px;height:21px;background:#b1bfc0;border:1px solid #9fb0b1;box-sizing:border-box;"></div>
<div style="left:110px;top:610px;width:58px;height:43px;background:#c4aeb6;border:1px solid #b39ba4;box-sizing:border-box;"></div>
<div style="left:29px;top:249px;width:811px;height:0px;"></div>
<div style="left:-56.5px;top:395.7px;width:300px;height:30px;line-height:30px;text-align:center;white-space:nowrap;transform:rotate(-90deg) scaleX(0.884);font-size:22px;font-weight:bold;color:#263d39;">BALANCE SHEET</div>
<div style="left:-11.699999999999989px;top:269.9px;width:300px;height:30px;line-height:30px;text-align:center;white-space:nowrap;transform:rotate(-90deg) scaleX(0.845);font-size:17px;color:#263d39;">ASSETS</div>
<div style="left:-11.400000000000006px;top:363.5px;width:300px;height:30px;line-height:30px;text-align:center;white-space:nowrap;transform:rotate(-90deg) scaleX(0.822);font-size:16.5px;color:#263d39;">LIABILITIES</div>
<div style="left:-21.19999999999999px;top:479.7px;width:300px;height:30px;line-height:30px;text-align:center;white-space:nowrap;transform:rotate(-90deg) scaleX(0.97);font-size:17px;color:#263d39;">OWNER’S</div>
<div style="left:0.9000000000000057px;top:479.5px;width:300px;height:30px;line-height:30px;text-align:center;white-space:nowrap;transform:rotate(-90deg) scaleX(1.04);font-size:17px;color:#263d39;">CAPITAL</div>
<div style="left:-64.5px;top:594.5px;width:300px;height:30px;line-height:30px;text-align:center;white-space:nowrap;transform:rotate(-90deg) scaleX(1.0);font-size:12.3px;font-weight:bold;color:#263d39;">INCOME</div>
<div style="left:-48.2px;top:595px;width:300px;height:30px;line-height:30px;text-align:center;white-space:nowrap;transform:rotate(-90deg) scaleX(1.01);font-size:12.6px;font-weight:bold;color:#263d39;">STATEMENT</div>
<div style="left:110px;top:569px;width:58px;height:21px;line-height:21px;text-align:center;white-space:nowrap;font-size:12.4px;color:#263d39;"><span style="display:inline-block;transform:scaleX(0.84);margin-left:-1px;">REVENUE</span></div>
<div style="left:110px;top:610px;width:58px;height:42px;line-height:41px;text-align:center;white-space:nowrap;font-size:11.6px;color:#263d39;"><span style="display:inline-block;transform:scaleX(0.80);margin-left:-1px;">EXPENSES</span></div>
<div style="left:168px;top:254px;width:46px;height:21px;line-height:21px;text-align:right;white-space:nowrap;font-size:13.2px;color:#263d39;">1002</div>
<div style="left:219px;top:254px;width:46px;height:21px;line-height:21px;text-align:right;white-space:nowrap;font-size:13.2px;color:#263d39;">1060</div>
<div style="left:273px;top:254px;height:21px;line-height:21px;white-space:nowrap;font-size:13.2px;color:#263d39;">Chequing Bank Account</div>
<div style="left:571px;top:254px;width:97px;height:21px;line-height:21px;text-align:right;white-space:nowrap;font-size:13.2px;color:#263d39;">14,000.00</div>
<div style="left:672px;top:254px;width:97px;height:21px;line-height:21px;text-align:right;white-space:nowrap;font-size:13.2px;color:#263d39;">14,000.00</div>
<div style="left:168px;top:275px;width:46px;height:21px;line-height:21px;text-align:right;white-space:nowrap;font-size:13.2px;color:#263d39;">1060</div>
<div style="left:219px;top:275px;width:46px;height:21px;line-height:21px;text-align:right;white-space:nowrap;font-size:13.2px;color:#263d39;">1100</div>
<div style="left:273px;top:275px;height:21px;line-height:21px;white-space:nowrap;font-size:13.2px;color:#263d39;">Accounts Receivable</div>
<div style="left:168px;top:296px;width:46px;height:21px;line-height:21px;text-align:right;white-space:nowrap;font-size:13.2px;color:#263d39;font-style:italic;font-size:12.75px;">1066</div>
<div style="left:219px;top:296px;width:46px;height:21px;line-height:21px;text-align:right;white-space:nowrap;font-size:13.2px;color:#263d39;font-style:italic;font-size:12.75px;">1166</div>
<div style="left:273px;top:296px;height:21px;line-height:21px;white-space:nowrap;font-size:13.2px;color:#263d39;font-style:italic;font-size:12.75px;">Sales Tax Refund</div>
<div style="left:168px;top:338px;width:46px;height:21px;line-height:21px;text-align:right;white-space:nowrap;font-size:13.2px;color:#263d39;">2621</div>
<div style="left:219px;top:338px;width:46px;height:21px;line-height:21px;text-align:right;white-space:nowrap;font-size:13.2px;color:#263d39;">2100</div>
<div style="left:273px;top:338px;height:21px;line-height:21px;white-space:nowrap;font-size:13.2px;color:#263d39;">Accounts Payable</div>
<div style="left:571px;top:338px;width:97px;height:21px;line-height:21px;text-align:right;white-space:nowrap;font-size:13.2px;color:#263d39;">3,000.00</div>
<div style="left:672px;top:338px;width:97px;height:21px;line-height:21px;text-align:right;white-space:nowrap;font-size:13.2px;color:#263d39;">3,000.00</div>
<div style="left:168px;top:359px;width:46px;height:21px;line-height:21px;text-align:right;white-space:nowrap;font-size:13.2px;color:#263d39;">2621</div>
<div style="left:219px;top:359px;width:46px;height:21px;line-height:21px;text-align:right;white-space:nowrap;font-size:13.2px;color:#263d39;">2111</div>
<div style="left:273px;top:359px;height:21px;line-height:21px;white-space:nowrap;font-size:13.2px;color:#263d39;">Visa - Liberty First National Bank</div>
<div style="left:168px;top:380px;width:46px;height:21px;line-height:21px;text-align:right;white-space:nowrap;font-size:13.2px;color:#263d39;font-style:italic;font-size:12.75px;">2680</div>
<div style="left:219px;top:380px;width:46px;height:21px;line-height:21px;text-align:right;white-space:nowrap;font-size:13.2px;color:#263d39;font-style:italic;font-size:12.75px;">2300</div>
<div style="left:273px;top:380px;height:21px;line-height:21px;white-space:nowrap;font-size:13.2px;color:#263d39;font-style:italic;font-size:12.75px;">CA Collected on Sales</div>
<div style="left:168px;top:401px;width:46px;height:21px;line-height:21px;text-align:right;white-space:nowrap;font-size:13.2px;color:#263d39;font-style:italic;font-size:12.75px;">2680</div>
<div style="left:219px;top:401px;width:46px;height:21px;line-height:21px;text-align:right;white-space:nowrap;font-size:13.2px;color:#263d39;font-style:italic;font-size:12.75px;">2438</div>
<div style="left:273px;top:401px;height:21px;line-height:21px;white-space:nowrap;font-size:13.2px;color:#263d39;font-style:italic;font-size:12.75px;">Sales Tax Payable</div>
<div style="left:219px;top:443px;width:46px;height:21px;line-height:21px;text-align:right;white-space:nowrap;font-size:13.2px;color:#263d39;">3641</div>
<div style="left:273px;top:443px;height:21px;line-height:21px;white-space:nowrap;font-size:13.2px;color:#263d39;">Capital Beginning Balance</div>
<div style="left:571px;top:443px;width:97px;height:21px;line-height:21px;text-align:right;white-space:nowrap;font-size:13.2px;color:#263d39;">11,000.00</div>
<div style="left:219px;top:464px;width:46px;height:21px;line-height:21px;text-align:right;white-space:nowrap;font-size:13.2px;color:#263d39;">3642</div>
<div style="left:273px;top:464px;height:21px;line-height:21px;white-space:nowrap;font-size:13.2px;color:#263d39;">Net Income (Loss)</div>
<div style="left:672px;top:464px;width:97px;height:21px;line-height:21px;text-align:right;white-space:nowrap;font-size:13.2px;color:#263d39;">10,000.00</div>
<div style="left:219px;top:485px;width:46px;height:21px;line-height:21px;text-align:right;white-space:nowrap;font-size:13.2px;color:#263d39;">3643</div>
<div style="left:273px;top:485px;height:21px;line-height:21px;white-space:nowrap;font-size:13.2px;color:#263d39;">Owner’s Withdrawals</div>
<div style="left:672px;top:485px;width:97px;height:21px;line-height:21px;text-align:right;white-space:nowrap;font-size:13.2px;color:#263d39;">(2,000.00)</div>
<div style="left:219px;top:506px;width:46px;height:21px;line-height:21px;text-align:right;white-space:nowrap;font-size:13.2px;color:#263d39;">3644</div>
<div style="left:273px;top:506px;height:21px;line-height:21px;white-space:nowrap;font-size:13.2px;color:#263d39;">Owner’s Contribution</div>
<div style="left:672px;top:506px;width:97px;height:21px;line-height:21px;text-align:right;white-space:nowrap;font-size:13.2px;color:#263d39;">3,000.00</div>
<div style="left:219px;top:527px;width:46px;height:21px;line-height:21px;text-align:right;white-space:nowrap;font-size:13.2px;color:#263d39;">3650</div>
<div style="left:273px;top:527px;height:21px;line-height:21px;white-space:nowrap;font-size:13.2px;color:#263d39;">Capital Ending Balance</div>
<div style="left:571px;top:527px;width:97px;height:21px;line-height:21px;text-align:right;white-space:nowrap;font-size:13.2px;color:#263d39;">11,000.00</div>
<div style="left:168px;top:569px;width:46px;height:21px;line-height:21px;text-align:right;white-space:nowrap;font-size:13.2px;color:#263d39;">8000</div>
<div style="left:219px;top:569px;width:46px;height:21px;line-height:21px;text-align:right;white-space:nowrap;font-size:13.2px;color:#263d39;">4200</div>
<div style="left:273px;top:569px;height:21px;line-height:21px;white-space:nowrap;font-size:13.2px;color:#263d39;">Sales</div>
<div style="left:168px;top:611px;width:46px;height:21px;line-height:21px;text-align:right;white-space:nowrap;font-size:13.2px;color:#263d39;">9220</div>
<div style="left:219px;top:611px;width:46px;height:21px;line-height:21px;text-align:right;white-space:nowrap;font-size:13.2px;color:#263d39;">5800</div>
<div style="left:273px;top:611px;height:21px;line-height:21px;white-space:nowrap;font-size:13.2px;color:#263d39;">Utilities</div>
<div style="left:168px;top:632px;width:46px;height:21px;line-height:21px;text-align:right;white-space:nowrap;font-size:13.2px;color:#263d39;">9225</div>
<div style="left:219px;top:632px;width:46px;height:21px;line-height:21px;text-align:right;white-space:nowrap;font-size:13.2px;color:#263d39;">5810</div>
<div style="left:273px;top:632px;height:21px;line-height:21px;white-space:nowrap;font-size:13.2px;color:#263d39;">Telephone and Telecommunications</div>
<div style="left:75px;top:207px;width:93px;height:43px;border:2px solid #1a55d0;box-sizing:border-box;"></div>
<div style="left:163px;top:245px;width:9px;height:9px;border-radius:50%;background:#1a55d0;border:1px solid #d6d6d6;box-sizing:border-box;"></div>
<div style="left:101px;top:668px;height:20px;line-height:20px;white-space:nowrap;font-size:14.9px;color:#1d55bd;-webkit-text-stroke:0.3px #1d55bd;">Add</div>
<div style="left:158px;top:664px;width:58px;height:31px;border:1px solid #707070;border-radius:4px;box-sizing:border-box;text-align:center;line-height:29px;font-size:14.4px;color:#3c3c3c;">1000</div>
<div style="left:224px;top:672px;height:20px;line-height:20px;white-space:nowrap;font-size:14.4px;color:#3c3c3c;">more rows at the bottom</div>
<div style="left:860px;top:183px;width:1018px;height:24px;background:#d6d6d6;"></div>
<div style="left:860px;top:183px;width:1030px;height:1px;background:#acacac;"></div>
<div style="left:860px;top:207px;width:1018px;height:1px;background:#b8b8b8;"></div>
<div style="left:906px;top:184px;width:45px;height:23px;background:#b1bed6;"></div>
<div style="left:901px;top:184px;width:4px;height:23px;background:#a8a8a8;"></div>
<div style="left:951px;top:184px;width:1px;height:23px;background:#b8b8b8;"></div>
<div style="left:906px;top:184px;width:45px;height:23px;line-height:23px;text-align:center;font-size:11.3px;font-weight:bold;color:#0b1f48;">A</div>
<div style="left:1102px;top:184px;width:1px;height:23px;background:#b8b8b8;"></div>
<div style="left:952px;top:184px;width:150px;height:23px;line-height:23px;text-align:center;font-size:11.3px;color:#575757;">B</div>
<div style="left:1303px;top:184px;width:1px;height:23px;background:#b8b8b8;"></div>
<div style="left:1103px;top:184px;width:200px;height:23px;line-height:23px;text-align:center;font-size:11.3px;color:#575757;">C</div>
<div style="left:1504px;top:184px;width:1px;height:23px;background:#b8b8b8;"></div>
<div style="left:1304px;top:184px;width:200px;height:23px;line-height:23px;text-align:center;font-size:11.3px;color:#575757;">D</div>
<div style="left:1575px;top:184px;width:1px;height:23px;background:#b8b8b8;"></div>
<div style="left:1505px;top:184px;width:70px;height:23px;line-height:23px;text-align:center;font-size:11.3px;color:#575757;">E</div>
<div style="left:1646px;top:184px;width:1px;height:23px;background:#b8b8b8;"></div>
<div style="left:1576px;top:184px;width:70px;height:23px;line-height:23px;text-align:center;font-size:11.3px;color:#575757;">F</div>
<div style="left:1717px;top:184px;width:1px;height:23px;background:#b8b8b8;"></div>
<div style="left:1647px;top:184px;width:70px;height:23px;line-height:23px;text-align:center;font-size:11.3px;color:#575757;">G</div>
<div style="left:1788px;top:184px;width:1px;height:23px;background:#b8b8b8;"></div>
<div style="left:1718px;top:184px;width:70px;height:23px;line-height:23px;text-align:center;font-size:11.3px;color:#575757;">H</div>
<div style="left:1878px;top:184px;width:1px;height:23px;background:#b8b8b8;"></div>
<div style="left:860px;top:208px;width:1018px;height:256px;background:#d6d6d6;"></div>
<div style="left:1789px;top:233px;width:89px;height:231px;background:#d5cba8;"></div>
<div style="left:860px;top:208px;width:45px;height:20px;background:#b1bed6;"></div>
<div style="left:905px;top:208px;width:1px;height:256px;background:#b8b8b8;"></div>
<div style="left:860px;top:228px;width:1018px;height:1px;background:#b8b8b8;"></div>
<div style="left:860px;top:229px;width:1018px;height:4px;background:#a8a8a8;"></div>
<div style="left:1879px;top:229px;width:11px;height:4px;background:#bcc4d0;"></div>
<div style="left:860px;top:208px;width:45px;height:20px;line-height:20px;text-align:center;font-size:11.5px;font-weight:bold;color:#0b1f48;">1</div>
<div style="left:951px;top:208px;width:1px;height:20px;background:#b8b8b8;"></div>
<div style="left:906px;top:208px;width:45px;height:21.5px;line-height:21.5px;text-align:center;white-space:nowrap;font-size:13.2px;color:#263d39;font-weight:bold;">DATE</div>
<div style="left:1102px;top:208px;width:1px;height:20px;background:#b8b8b8;"></div>
<div style="left:952px;top:208px;width:150px;height:21.5px;line-height:21.5px;text-align:center;white-space:nowrap;font-size:13.2px;color:#263d39;font-weight:bold;">ITEM</div>
<div style="left:1303px;top:208px;width:1px;height:20px;background:#b8b8b8;"></div>
<div style="left:1103px;top:208px;width:200px;height:21.5px;line-height:21.5px;text-align:center;white-space:nowrap;font-size:13.2px;color:#263d39;font-weight:bold;">DEBIT</div>
<div style="left:1504px;top:208px;width:1px;height:20px;background:#b8b8b8;"></div>
<div style="left:1304px;top:208px;width:200px;height:21.5px;line-height:21.5px;text-align:center;white-space:nowrap;font-size:13.2px;color:#263d39;font-weight:bold;">CREDIT</div>
<div style="left:1575px;top:208px;width:1px;height:20px;background:#b8b8b8;"></div>
<div style="left:1505px;top:208px;width:70px;height:21.5px;line-height:21.5px;text-align:center;white-space:nowrap;font-size:13.2px;color:#263d39;font-weight:bold;">AMOUNT</div>
<div style="left:1646px;top:208px;width:1px;height:20px;background:#b8b8b8;"></div>
<div style="left:1576px;top:208px;width:70px;height:21.5px;line-height:21.5px;text-align:center;white-space:nowrap;font-size:13.2px;color:#263d39;font-weight:bold;">STAX</div>
<div style="left:1717px;top:208px;width:1px;height:20px;background:#b8b8b8;"></div>
<div style="left:1647px;top:208px;width:70px;height:21.5px;line-height:21.5px;text-align:center;white-space:nowrap;font-size:13.2px;color:#263d39;font-weight:bold;">STJUR</div>
<div style="left:1788px;top:208px;width:1px;height:20px;background:#b8b8b8;"></div>
<div style="left:1718px;top:208px;width:70px;height:21.5px;line-height:21.5px;text-align:center;white-space:nowrap;font-size:13.2px;color:#263d39;font-weight:bold;">TOTAL</div>
<div style="left:1878px;top:208px;width:1px;height:20px;background:#b8b8b8;"></div>
<div style="left:860px;top:253px;width:1018px;height:1px;background:#b8b8b8;"></div>
<div style="left:860px;top:233px;width:45px;height:20px;line-height:19px;text-align:center;font-size:11.5px;color:#444;">2</div>
<div style="left:951px;top:233px;width:1px;height:21px;background:#b8b8b8;"></div>
<div style="left:1102px;top:233px;width:1px;height:21px;background:#b8b8b8;"></div>
<div style="left:1303px;top:233px;width:1px;height:21px;background:#b8b8b8;"></div>
<div style="left:1504px;top:233px;width:1px;height:21px;background:#b8b8b8;"></div>
<div style="left:1575px;top:233px;width:1px;height:21px;background:#b8b8b8;"></div>
<div style="left:1646px;top:233px;width:1px;height:21px;background:#b8b8b8;"></div>
<div style="left:1717px;top:233px;width:1px;height:21px;background:#b8b8b8;"></div>
<div style="left:1788px;top:233px;width:1px;height:21px;background:#b8b8b8;"></div>
<div style="left:1789px;top:253px;width:89px;height:1px;background:#c4bb98;"></div>
<div style="left:1112px;top:235px;width:182px;height:16px;border-radius:8px;background:#c4c5c8;"></div>
<svg style="left:1278px;top:241px;" width="10" height="6" viewBox="0 0 10 6"><path d="M0.5 0.5H9.5L5 5Z" fill="#2b3330"/></svg>
<div style="left:1313px;top:235px;width:182px;height:16px;border-radius:8px;background:#c4c5c8;"></div>
<svg style="left:1479px;top:241px;" width="10" height="6" viewBox="0 0 10 6"><path d="M0.5 0.5H9.5L5 5Z" fill="#2b3330"/></svg>
<div style="left:1656px;top:235px;width:52px;height:16px;border-radius:8px;background:#c4c5c8;"></div>
<svg style="left:1692px;top:241px;" width="10" height="6" viewBox="0 0 10 6"><path d="M0.5 0.5H9.5L5 5Z" fill="#2b3330"/></svg>
<div style="left:860px;top:274px;width:1018px;height:1px;background:#b8b8b8;"></div>
<div style="left:860px;top:254px;width:45px;height:20px;line-height:19px;text-align:center;font-size:11.5px;color:#444;">3</div>
<div style="left:951px;top:254px;width:1px;height:21px;background:#b8b8b8;"></div>
<div style="left:1102px;top:254px;width:1px;height:21px;background:#b8b8b8;"></div>
<div style="left:1303px;top:254px;width:1px;height:21px;background:#b8b8b8;"></div>
<div style="left:1504px;top:254px;width:1px;height:21px;background:#b8b8b8;"></div>
<div style="left:1575px;top:254px;width:1px;height:21px;background:#b8b8b8;"></div>
<div style="left:1646px;top:254px;width:1px;height:21px;background:#b8b8b8;"></div>
<div style="left:1717px;top:254px;width:1px;height:21px;background:#b8b8b8;"></div>
<div style="left:1788px;top:254px;width:1px;height:21px;background:#b8b8b8;"></div>
<div style="left:1789px;top:274px;width:89px;height:1px;background:#c4bb98;"></div>
<div style="left:1112px;top:256px;width:182px;height:16px;border-radius:8px;background:#c4c5c8;"></div>
<svg style="left:1278px;top:262px;" width="10" height="6" viewBox="0 0 10 6"><path d="M0.5 0.5H9.5L5 5Z" fill="#2b3330"/></svg>
<div style="left:1313px;top:256px;width:182px;height:16px;border-radius:8px;background:#c4c5c8;"></div>
<svg style="left:1479px;top:262px;" width="10" height="6" viewBox="0 0 10 6"><path d="M0.5 0.5H9.5L5 5Z" fill="#2b3330"/></svg>
<div style="left:1656px;top:256px;width:52px;height:16px;border-radius:8px;background:#c4c5c8;"></div>
<svg style="left:1692px;top:262px;" width="10" height="6" viewBox="0 0 10 6"><path d="M0.5 0.5H9.5L5 5Z" fill="#2b3330"/></svg>
<div style="left:860px;top:295px;width:1018px;height:1px;background:#b8b8b8;"></div>
<div style="left:860px;top:275px;width:45px;height:20px;line-height:19px;text-align:center;font-size:11.5px;color:#444;">4</div>
<div style="left:951px;top:275px;width:1px;height:21px;background:#b8b8b8;"></div>
<div style="left:1102px;top:275px;width:1px;height:21px;background:#b8b8b8;"></div>
<div style="left:1303px;top:275px;width:1px;height:21px;background:#b8b8b8;"></div>
<div style="left:1504px;top:275px;width:1px;height:21px;background:#b8b8b8;"></div>
<div style="left:1575px;top:275px;width:1px;height:21px;background:#b8b8b8;"></div>
<div style="left:1646px;top:275px;width:1px;height:21px;background:#b8b8b8;"></div>
<div style="left:1717px;top:275px;width:1px;height:21px;background:#b8b8b8;"></div>
<div style="left:1788px;top:275px;width:1px;height:21px;background:#b8b8b8;"></div>
<div style="left:1789px;top:295px;width:89px;height:1px;background:#c4bb98;"></div>
<div style="left:1112px;top:277px;width:182px;height:16px;border-radius:8px;background:#c4c5c8;"></div>
<svg style="left:1278px;top:283px;" width="10" height="6" viewBox="0 0 10 6"><path d="M0.5 0.5H9.5L5 5Z" fill="#2b3330"/></svg>
<div style="left:1313px;top:277px;width:182px;height:16px;border-radius:8px;background:#c4c5c8;"></div>
<svg style="left:1479px;top:283px;" width="10" height="6" viewBox="0 0 10 6"><path d="M0.5 0.5H9.5L5 5Z" fill="#2b3330"/></svg>
<div style="left:1656px;top:277px;width:52px;height:16px;border-radius:8px;background:#c4c5c8;"></div>
<svg style="left:1692px;top:283px;" width="10" height="6" viewBox="0 0 10 6"><path d="M0.5 0.5H9.5L5 5Z" fill="#2b3330"/></svg>
<div style="left:860px;top:316px;width:1018px;height:1px;background:#b8b8b8;"></div>
<div style="left:860px;top:296px;width:45px;height:20px;line-height:19px;text-align:center;font-size:11.5px;color:#444;">5</div>
<div style="left:951px;top:296px;width:1px;height:21px;background:#b8b8b8;"></div>
<div style="left:1102px;top:296px;width:1px;height:21px;background:#b8b8b8;"></div>
<div style="left:1303px;top:296px;width:1px;height:21px;background:#b8b8b8;"></div>
<div style="left:1504px;top:296px;width:1px;height:21px;background:#b8b8b8;"></div>
<div style="left:1575px;top:296px;width:1px;height:21px;background:#b8b8b8;"></div>
<div style="left:1646px;top:296px;width:1px;height:21px;background:#b8b8b8;"></div>
<div style="left:1717px;top:296px;width:1px;height:21px;background:#b8b8b8;"></div>
<div style="left:1788px;top:296px;width:1px;height:21px;background:#b8b8b8;"></div>
<div style="left:1789px;top:316px;width:89px;height:1px;background:#c4bb98;"></div>
<div style="left:1112px;top:298px;width:182px;height:16px;border-radius:8px;background:#c4c5c8;"></div>
<svg style="left:1278px;top:304px;" width="10" height="6" viewBox="0 0 10 6"><path d="M0.5 0.5H9.5L5 5Z" fill="#2b3330"/></svg>
<div style="left:1313px;top:298px;width:182px;height:16px;border-radius:8px;background:#c4c5c8;"></div>
<svg style="left:1479px;top:304px;" width="10" height="6" viewBox="0 0 10 6"><path d="M0.5 0.5H9.5L5 5Z" fill="#2b3330"/></svg>
<div style="left:1656px;top:298px;width:52px;height:16px;border-radius:8px;background:#c4c5c8;"></div>
<svg style="left:1692px;top:304px;" width="10" height="6" viewBox="0 0 10 6"><path d="M0.5 0.5H9.5L5 5Z" fill="#2b3330"/></svg>
<div style="left:860px;top:337px;width:1018px;height:1px;background:#b8b8b8;"></div>
<div style="left:860px;top:317px;width:45px;height:20px;line-height:19px;text-align:center;font-size:11.5px;color:#444;">6</div>
<div style="left:951px;top:317px;width:1px;height:21px;background:#b8b8b8;"></div>
<div style="left:1102px;top:317px;width:1px;height:21px;background:#b8b8b8;"></div>
<div style="left:1303px;top:317px;width:1px;height:21px;background:#b8b8b8;"></div>
<div style="left:1504px;top:317px;width:1px;height:21px;background:#b8b8b8;"></div>
<div style="left:1575px;top:317px;width:1px;height:21px;background:#b8b8b8;"></div>
<div style="left:1646px;top:317px;width:1px;height:21px;background:#b8b8b8;"></div>
<div style="left:1717px;top:317px;width:1px;height:21px;background:#b8b8b8;"></div>
<div style="left:1788px;top:317px;width:1px;height:21px;background:#b8b8b8;"></div>
<div style="left:1789px;top:337px;width:89px;height:1px;background:#c4bb98;"></div>
<div style="left:1112px;top:319px;width:182px;height:16px;border-radius:8px;background:#c4c5c8;"></div>
<svg style="left:1278px;top:325px;" width="10" height="6" viewBox="0 0 10 6"><path d="M0.5 0.5H9.5L5 5Z" fill="#2b3330"/></svg>
<div style="left:1313px;top:319px;width:182px;height:16px;border-radius:8px;background:#c4c5c8;"></div>
<svg style="left:1479px;top:325px;" width="10" height="6" viewBox="0 0 10 6"><path d="M0.5 0.5H9.5L5 5Z" fill="#2b3330"/></svg>
<div style="left:1656px;top:319px;width:52px;height:16px;border-radius:8px;background:#c4c5c8;"></div>
<svg style="left:1692px;top:325px;" width="10" height="6" viewBox="0 0 10 6"><path d="M0.5 0.5H9.5L5 5Z" fill="#2b3330"/></svg>
<div style="left:860px;top:358px;width:1018px;height:1px;background:#b8b8b8;"></div>
<div style="left:860px;top:338px;width:45px;height:20px;line-height:19px;text-align:center;font-size:11.5px;color:#444;">7</div>
<div style="left:951px;top:338px;width:1px;height:21px;background:#b8b8b8;"></div>
<div style="left:1102px;top:338px;width:1px;height:21px;background:#b8b8b8;"></div>
<div style="left:1303px;top:338px;width:1px;height:21px;background:#b8b8b8;"></div>
<div style="left:1504px;top:338px;width:1px;height:21px;background:#b8b8b8;"></div>
<div style="left:1575px;top:338px;width:1px;height:21px;background:#b8b8b8;"></div>
<div style="left:1646px;top:338px;width:1px;height:21px;background:#b8b8b8;"></div>
<div style="left:1717px;top:338px;width:1px;height:21px;background:#b8b8b8;"></div>
<div style="left:1788px;top:338px;width:1px;height:21px;background:#b8b8b8;"></div>
<div style="left:1789px;top:358px;width:89px;height:1px;background:#c4bb98;"></div>
<div style="left:1112px;top:340px;width:182px;height:16px;border-radius:8px;background:#c4c5c8;"></div>
<svg style="left:1278px;top:346px;" width="10" height="6" viewBox="0 0 10 6"><path d="M0.5 0.5H9.5L5 5Z" fill="#2b3330"/></svg>
<div style="left:1313px;top:340px;width:182px;height:16px;border-radius:8px;background:#c4c5c8;"></div>
<svg style="left:1479px;top:346px;" width="10" height="6" viewBox="0 0 10 6"><path d="M0.5 0.5H9.5L5 5Z" fill="#2b3330"/></svg>
<div style="left:1656px;top:340px;width:52px;height:16px;border-radius:8px;background:#c4c5c8;"></div>
<svg style="left:1692px;top:346px;" width="10" height="6" viewBox="0 0 10 6"><path d="M0.5 0.5H9.5L5 5Z" fill="#2b3330"/></svg>
<div style="left:860px;top:379px;width:1018px;height:1px;background:#b8b8b8;"></div>
<div style="left:860px;top:359px;width:45px;height:20px;line-height:19px;text-align:center;font-size:11.5px;color:#444;">8</div>
<div style="left:951px;top:359px;width:1px;height:21px;background:#b8b8b8;"></div>
<div style="left:1102px;top:359px;width:1px;height:21px;background:#b8b8b8;"></div>
<div style="left:1303px;top:359px;width:1px;height:21px;background:#b8b8b8;"></div>
<div style="left:1504px;top:359px;width:1px;height:21px;background:#b8b8b8;"></div>
<div style="left:1575px;top:359px;width:1px;height:21px;background:#b8b8b8;"></div>
<div style="left:1646px;top:359px;width:1px;height:21px;background:#b8b8b8;"></div>
<div style="left:1717px;top:359px;width:1px;height:21px;background:#b8b8b8;"></div>
<div style="left:1788px;top:359px;width:1px;height:21px;background:#b8b8b8;"></div>
<div style="left:1789px;top:379px;width:89px;height:1px;background:#c4bb98;"></div>
<div style="left:1112px;top:361px;width:182px;height:16px;border-radius:8px;background:#c4c5c8;"></div>
<svg style="left:1278px;top:367px;" width="10" height="6" viewBox="0 0 10 6"><path d="M0.5 0.5H9.5L5 5Z" fill="#2b3330"/></svg>
<div style="left:1313px;top:361px;width:182px;height:16px;border-radius:8px;background:#c4c5c8;"></div>
<svg style="left:1479px;top:367px;" width="10" height="6" viewBox="0 0 10 6"><path d="M0.5 0.5H9.5L5 5Z" fill="#2b3330"/></svg>
<div style="left:1656px;top:361px;width:52px;height:16px;border-radius:8px;background:#c4c5c8;"></div>
<svg style="left:1692px;top:367px;" width="10" height="6" viewBox="0 0 10 6"><path d="M0.5 0.5H9.5L5 5Z" fill="#2b3330"/></svg>
<div style="left:860px;top:400px;width:1018px;height:1px;background:#b8b8b8;"></div>
<div style="left:860px;top:380px;width:45px;height:20px;line-height:19px;text-align:center;font-size:11.5px;color:#444;">9</div>
<div style="left:951px;top:380px;width:1px;height:21px;background:#b8b8b8;"></div>
<div style="left:1102px;top:380px;width:1px;height:21px;background:#b8b8b8;"></div>
<div style="left:1303px;top:380px;width:1px;height:21px;background:#b8b8b8;"></div>
<div style="left:1504px;top:380px;width:1px;height:21px;background:#b8b8b8;"></div>
<div style="left:1575px;top:380px;width:1px;height:21px;background:#b8b8b8;"></div>
<div style="left:1646px;top:380px;width:1px;height:21px;background:#b8b8b8;"></div>
<div style="left:1717px;top:380px;width:1px;height:21px;background:#b8b8b8;"></div>
<div style="left:1788px;top:380px;width:1px;height:21px;background:#b8b8b8;"></div>
<div style="left:1789px;top:400px;width:89px;height:1px;background:#c4bb98;"></div>
<div style="left:1112px;top:382px;width:182px;height:16px;border-radius:8px;background:#c4c5c8;"></div>
<svg style="left:1278px;top:388px;" width="10" height="6" viewBox="0 0 10 6"><path d="M0.5 0.5H9.5L5 5Z" fill="#2b3330"/></svg>
<div style="left:1313px;top:382px;width:182px;height:16px;border-radius:8px;background:#c4c5c8;"></div>
<svg style="left:1479px;top:388px;" width="10" height="6" viewBox="0 0 10 6"><path d="M0.5 0.5H9.5L5 5Z" fill="#2b3330"/></svg>
<div style="left:1656px;top:382px;width:52px;height:16px;border-radius:8px;background:#c4c5c8;"></div>
<svg style="left:1692px;top:388px;" width="10" height="6" viewBox="0 0 10 6"><path d="M0.5 0.5H9.5L5 5Z" fill="#2b3330"/></svg>
<div style="left:860px;top:421px;width:1018px;height:1px;background:#b8b8b8;"></div>
<div style="left:860px;top:401px;width:45px;height:20px;line-height:19px;text-align:center;font-size:11.5px;color:#444;">10</div>
<div style="left:951px;top:401px;width:1px;height:21px;background:#b8b8b8;"></div>
<div style="left:1102px;top:401px;width:1px;height:21px;background:#b8b8b8;"></div>
<div style="left:1303px;top:401px;width:1px;height:21px;background:#b8b8b8;"></div>
<div style="left:1504px;top:401px;width:1px;height:21px;background:#b8b8b8;"></div>
<div style="left:1575px;top:401px;width:1px;height:21px;background:#b8b8b8;"></div>
<div style="left:1646px;top:401px;width:1px;height:21px;background:#b8b8b8;"></div>
<div style="left:1717px;top:401px;width:1px;height:21px;background:#b8b8b8;"></div>
<div style="left:1788px;top:401px;width:1px;height:21px;background:#b8b8b8;"></div>
<div style="left:1789px;top:421px;width:89px;height:1px;background:#c4bb98;"></div>
<div style="left:1112px;top:403px;width:182px;height:16px;border-radius:8px;background:#c4c5c8;"></div>
<svg style="left:1278px;top:409px;" width="10" height="6" viewBox="0 0 10 6"><path d="M0.5 0.5H9.5L5 5Z" fill="#2b3330"/></svg>
<div style="left:1313px;top:403px;width:182px;height:16px;border-radius:8px;background:#c4c5c8;"></div>
<svg style="left:1479px;top:409px;" width="10" height="6" viewBox="0 0 10 6"><path d="M0.5 0.5H9.5L5 5Z" fill="#2b3330"/></svg>
<div style="left:1656px;top:403px;width:52px;height:16px;border-radius:8px;background:#c4c5c8;"></div>
<svg style="left:1692px;top:409px;" width="10" height="6" viewBox="0 0 10 6"><path d="M0.5 0.5H9.5L5 5Z" fill="#2b3330"/></svg>
<div style="left:860px;top:442px;width:1018px;height:1px;background:#b8b8b8;"></div>
<div style="left:860px;top:422px;width:45px;height:20px;line-height:19px;text-align:center;font-size:11.5px;color:#444;">11</div>
<div style="left:951px;top:422px;width:1px;height:21px;background:#b8b8b8;"></div>
<div style="left:1102px;top:422px;width:1px;height:21px;background:#b8b8b8;"></div>
<div style="left:1303px;top:422px;width:1px;height:21px;background:#b8b8b8;"></div>
<div style="left:1504px;top:422px;width:1px;height:21px;background:#b8b8b8;"></div>
<div style="left:1575px;top:422px;width:1px;height:21px;background:#b8b8b8;"></div>
<div style="left:1646px;top:422px;width:1px;height:21px;background:#b8b8b8;"></div>
<div style="left:1717px;top:422px;width:1px;height:21px;background:#b8b8b8;"></div>
<div style="left:1788px;top:422px;width:1px;height:21px;background:#b8b8b8;"></div>
<div style="left:1789px;top:442px;width:89px;height:1px;background:#c4bb98;"></div>
<div style="left:1112px;top:424px;width:182px;height:16px;border-radius:8px;background:#c4c5c8;"></div>
<svg style="left:1278px;top:430px;" width="10" height="6" viewBox="0 0 10 6"><path d="M0.5 0.5H9.5L5 5Z" fill="#2b3330"/></svg>
<div style="left:1313px;top:424px;width:182px;height:16px;border-radius:8px;background:#c4c5c8;"></div>
<svg style="left:1479px;top:430px;" width="10" height="6" viewBox="0 0 10 6"><path d="M0.5 0.5H9.5L5 5Z" fill="#2b3330"/></svg>
<div style="left:1656px;top:424px;width:52px;height:16px;border-radius:8px;background:#c4c5c8;"></div>
<svg style="left:1692px;top:430px;" width="10" height="6" viewBox="0 0 10 6"><path d="M0.5 0.5H9.5L5 5Z" fill="#2b3330"/></svg>
<div style="left:860px;top:463px;width:1018px;height:1px;background:#b8b8b8;"></div>
<div style="left:860px;top:443px;width:45px;height:20px;line-height:19px;text-align:center;font-size:11.5px;color:#444;">12</div>
<div style="left:951px;top:443px;width:1px;height:21px;background:#b8b8b8;"></div>
<div style="left:1102px;top:443px;width:1px;height:21px;background:#b8b8b8;"></div>
<div style="left:1303px;top:443px;width:1px;height:21px;background:#b8b8b8;"></div>
<div style="left:1504px;top:443px;width:1px;height:21px;background:#b8b8b8;"></div>
<div style="left:1575px;top:443px;width:1px;height:21px;background:#b8b8b8;"></div>
<div style="left:1646px;top:443px;width:1px;height:21px;background:#b8b8b8;"></div>
<div style="left:1717px;top:443px;width:1px;height:21px;background:#b8b8b8;"></div>
<div style="left:1788px;top:443px;width:1px;height:21px;background:#b8b8b8;"></div>
<div style="left:1789px;top:463px;width:89px;height:1px;background:#c4bb98;"></div>
<div style="left:1112px;top:445px;width:182px;height:16px;border-radius:8px;background:#c4c5c8;"></div>
<svg style="left:1278px;top:451px;" width="10" height="6" viewBox="0 0 10 6"><path d="M0.5 0.5H9.5L5 5Z" fill="#2b3330"/></svg>
<div style="left:1313px;top:445px;width:182px;height:16px;border-radius:8px;background:#c4c5c8;"></div>
<svg style="left:1479px;top:451px;" width="10" height="6" viewBox="0 0 10 6"><path d="M0.5 0.5H9.5L5 5Z" fill="#2b3330"/></svg>
<div style="left:1656px;top:445px;width:52px;height:16px;border-radius:8px;background:#c4c5c8;"></div>
<svg style="left:1692px;top:451px;" width="10" height="6" viewBox="0 0 10 6"><path d="M0.5 0.5H9.5L5 5Z" fill="#2b3330"/></svg>
<div style="left:905px;top:207px;width:48px;height:23px;border:2px solid #1a55d0;box-sizing:border-box;"></div>
<div style="left:947px;top:224px;width:9px;height:9px;border-radius:50%;background:#1a55d0;border:1px solid #d6d6d6;box-sizing:border-box;"></div>
<div style="left:932px;top:480px;height:20px;line-height:20px;white-space:nowrap;font-size:14.9px;color:#1d55bd;-webkit-text-stroke:0.3px #1d55bd;">Add</div>
<div style="left:989px;top:475px;width:58px;height:31px;border:1px solid #707070;border-radius:4px;box-sizing:border-box;text-align:center;line-height:29px;font-size:14.4px;color:#3c3c3c;">1000</div>
<div style="left:1055px;top:483px;height:20px;line-height:20px;white-space:nowrap;font-size:14.4px;color:#3c3c3c;">more rows at the bottom</div>
<div style="left:907px;top:986px;width:805px;height:10px;background:#b4b4b4;border-radius:5px;"></div>
<div style="left:163px;top:999px;width:174px;height:36px;background:#bcc4d2;"></div>
<div style="left:175px;top:1000px;height:36px;line-height:36px;white-space:nowrap;font-size:15px;font-weight:bold;color:#1a55c6;">Chart of Accounts</div>
<svg style="left:316px;top:1015px;" width="10" height="6" viewBox="0 0 10 6"><path d="M0.5 0.5H9.5L5 5Z" fill="#1a55c6"/></svg>
<div style="left:349px;top:1000px;height:36px;line-height:36px;white-space:nowrap;font-size:15.3px;color:#3c3c3c;">Journal</div>
<svg style="left:411px;top:1015px;" width="10" height="6" viewBox="0 0 10 6"><path d="M0.5 0.5H9.5L5 5Z" fill="#3c3c3c"/></svg>
<div style="left:1007px;top:1000px;height:36px;line-height:36px;white-space:nowrap;font-size:15px;color:#3c3c3c;-webkit-text-stroke:0.3px #3c3c3c;letter-spacing:0.45px;">Chart of Accounts</div>
<svg style="left:1143px;top:1015px;" width="10" height="6" viewBox="0 0 10 6"><path d="M0.5 0.5H9.5L5 5Z" fill="#3c3c3c"/></svg>
<div style="left:1164px;top:999px;width:98px;height:36px;background:#bcc4d2;"></div>
<div style="left:1176px;top:1000px;height:36px;line-height:36px;white-space:nowrap;font-size:15px;font-weight:bold;color:#1a55c6;">Journal</div>
<svg style="left:1241px;top:1015px;" width="10" height="6" viewBox="0 0 10 6"><path d="M0.5 0.5H9.5L5 5Z" fill="#1a55c6"/></svg>
<div style="left:816px;top:1011px;width:27.5px;height:28px;background:#37301a;border-top-left-radius:7px;"></div>
<svg style="left:0;top:0" width="1920" height="1080"><path d="M31.5 96.5 H837.5 Q844.5 96.5 844.5 103.5 V1003.5 Q844.5 1010.5 837.5 1010.5 H822.5 Q815.5 1010.5 815.5 1017.5 V1032.5 Q815.5 1039.5 808.5 1039.5 H31.5 Q24.5 1039.5 24.5 1032.5 V103.5 Q24.5 96.5 31.5 96.5 Z" fill="none" stroke="#7d7666" stroke-width="1"/><path d="M862.5 96.5 H1887.5 Q1894.5 96.5 1894.5 103.5 V1003.5 Q1894.5 1010.5 1887.5 1010.5 H1716.5 Q1709.5 1010.5 1709.5 1017.5 V1032.5 Q1709.5 1039.5 1702.5 1039.5 H862.5 Q855.5 1039.5 855.5 1032.5 V103.5 Q855.5 96.5 862.5 96.5 Z" fill="none" stroke="#7d7666" stroke-width="1"/></svg>
<div style="left:1710px;top:1011px;width:183px;height:28px;background:#37301a;border-top-left-radius:7px;"></div>
<svg style="left:829px;top:1020px;" width="6" height="16" viewBox="0 0 6 16"><circle cx="3" cy="3" r="1.25" fill="#d8d0c0"/><circle cx="3" cy="7.4" r="1.25" fill="#d8d0c0"/><circle cx="3" cy="11.8" r="1.25" fill="#d8d0c0"/></svg>
<svg style="left:1718px;top:1019px;" width="16" height="16" viewBox="0 0 16 16"><rect x="0" y="0" width="16" height="16" rx="2" fill="#28934a"/><rect x="2.00" y="4.96" width="12.00" height="1.92" fill="#e8e4ea"/><rect x="4.96" y="2.00" width="1.92" height="12.00" fill="#e8e4ea"/></svg>
<div style="left:1740px;top:1015px;height:24px;line-height:24px;white-space:nowrap;font-size:16px;color:#d8d1be;">docs.google.com</div>
<svg style="left:1879px;top:1020px;" width="6" height="16" viewBox="0 0 6 16"><circle cx="3" cy="3" r="1.25" fill="#d8d0c0"/><circle cx="3" cy="7.4" r="1.25" fill="#d8d0c0"/><circle cx="3" cy="11.8" r="1.25" fill="#d8d0c0"/></svg></div></body></html>
